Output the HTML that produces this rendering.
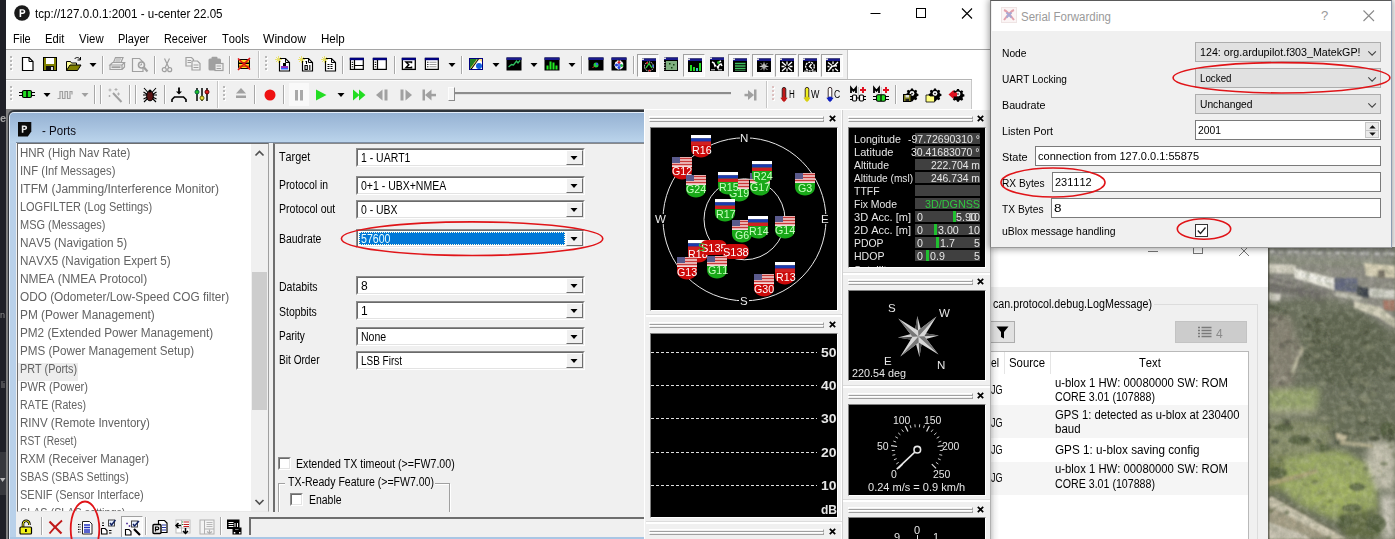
<!DOCTYPE html>
<html lang="en"><head><meta charset="utf-8"><title>tcp://127.0.0.1:2001 - u-center 22.05</title>
<style>
html,body{margin:0;padding:0;}
body{width:1395px;height:539px;overflow:hidden;position:relative;background:#fff;font-family:"Liberation Sans",sans-serif;font-kerning:none;}
div,span.t,svg{position:absolute;box-sizing:border-box;}
span.t{white-space:nowrap;transform-origin:0 50%;}
svg{overflow:visible;}
</style></head><body>
<div style="left:0px;top:0px;width:1395px;height:539px;background:#ffffff;"></div>
<div style="left:0px;top:0px;width:6px;height:539px;background:#1f2027;"></div>
<div style="left:0px;top:452px;width:6px;height:43px;background:#37383d;"></div>
<span class="t" style="left:0.00px;top:310.00px;font-size:9px;line-height:10.00px;color:#8a8a8a;transform:scaleX(1.0020);">n</span>
<span class="t" style="left:0.50px;top:380.00px;font-size:9px;line-height:10.00px;color:#8a8a8a;transform:scaleX(1.0020);">li</span>
<svg style="left:0px;top:478px;" width="6" height="5" viewBox="0 0 6 5"><path d="M0 0l2.500 4 3-4" fill="#bbb"/></svg>
<span class="t" style="left:0.30px;top:111.50px;font-size:11px;line-height:12.00px;color:#a8a8a8;font-weight:bold;transform:scaleX(1.0020);">e</span>
<div style="left:6px;top:49px;width:984px;height:1px;background:#a5a5a5;"></div>
<div style="left:6px;top:50px;width:841px;height:29px;background:#f0f0f0;"></div>
<div style="left:6px;top:79px;width:965px;height:30px;background:#f0f0f0;"></div>
<div style="left:6px;top:79px;width:965px;height:1px;background:#ffffff;"></div>
<div style="left:847px;top:50px;width:1px;height:29px;background:#c8c8c8;"></div>
<div style="left:847px;top:79px;width:125px;height:1px;background:#b4b4b4;"></div>
<div style="left:971px;top:80px;width:1px;height:29px;background:#c8c8c8;"></div>
<div style="left:258px;top:51px;width:1px;height:27px;background:#c5c5c5;"></div>
<div style="left:259px;top:51px;width:1px;height:27px;background:#ffffff;"></div>
<div style="left:217px;top:81px;width:1px;height:27px;background:#c5c5c5;"></div>
<div style="left:218px;top:81px;width:1px;height:27px;background:#ffffff;"></div>
<div style="left:766px;top:81px;width:1px;height:27px;background:#c5c5c5;"></div>
<div style="left:767px;top:81px;width:1px;height:27px;background:#ffffff;"></div>
<svg style="left:14px;top:5px;" width="16" height="16" viewBox="0 0 16 16"><circle cx="8" cy="8" r="7.800" fill="#1a1a1a"/><path d="M5.600 12V4.200h3.200c1.600 0 2.500 1 2.500 2.400S10.400 9 8.800 9H7.200v3zM7.200 5.600v2h1.400c.7 0 1.100-.4 1.100-1s-.4-1-1.100-1z" fill="#fff"/></svg>
<span class="t" style="left:35.00px;top:7.00px;font-size:12.5px;line-height:14.00px;color:#000;transform:scaleX(0.9273);">tcp://127.0.0.1:2001 - u-center 22.05</span>
<svg style="left:860px;top:0px;" width="130" height="30" viewBox="0 0 130 30"><path d="M10.500 13.500h10" stroke="#000"/><rect x="56.500" y="8.500" width="9" height="9" fill="none" stroke="#000"/><path d="M102 8.500l10 10M112 8.500l-10 10" stroke="#000" stroke-width="1.100"/></svg>
<span class="t" style="left:13.30px;top:32.20px;font-size:12px;line-height:14.00px;color:#000;transform:scaleX(0.9154);">File</span>
<span class="t" style="left:45.30px;top:32.20px;font-size:12px;line-height:14.00px;color:#000;transform:scaleX(0.9382);">Edit</span>
<span class="t" style="left:79.20px;top:32.20px;font-size:12px;line-height:14.00px;color:#000;transform:scaleX(0.9460);">View</span>
<span class="t" style="left:118.40px;top:32.20px;font-size:12px;line-height:14.00px;color:#000;transform:scaleX(0.9173);">Player</span>
<span class="t" style="left:164.40px;top:32.20px;font-size:12px;line-height:14.00px;color:#000;transform:scaleX(0.9082);">Receiver</span>
<span class="t" style="left:222.40px;top:32.20px;font-size:12px;line-height:14.00px;color:#000;transform:scaleX(0.9282);">Tools</span>
<span class="t" style="left:263.00px;top:32.20px;font-size:12px;line-height:14.00px;color:#000;transform:scaleX(1.0075);">Window</span>
<span class="t" style="left:320.60px;top:32.20px;font-size:12px;line-height:14.00px;color:#000;transform:scaleX(0.9644);">Help</span>
<div style="left:6px;top:79px;width:966px;height:1px;background:#b4b4b4;"></div>
<div style="left:6px;top:80px;width:965px;height:1px;background:#fcfcfc;"></div>
<svg style="left:10px;top:56px;" width="4" height="18" viewBox="0 0 4 18"><rect x="1" y="1" width="2" height="2" fill="#fff"/><rect x="0" y="0" width="2" height="2" fill="#b8b8b8"/><rect x="1" y="5" width="2" height="2" fill="#fff"/><rect x="0" y="4" width="2" height="2" fill="#b8b8b8"/><rect x="1" y="9" width="2" height="2" fill="#fff"/><rect x="0" y="8" width="2" height="2" fill="#b8b8b8"/><rect x="1" y="13" width="2" height="2" fill="#fff"/><rect x="0" y="12" width="2" height="2" fill="#b8b8b8"/></svg>
<svg style="left:19.5px;top:55.5px;" width="16" height="16" viewBox="0 0 16 16"><path d="M2.500 1.500h6.500l4 4v9h-10.500z" fill="#fff" stroke="#000" stroke-width="1.200"/><path d="M9 1.500v4h4" fill="none" stroke="#000"/></svg>
<svg style="left:42px;top:56px;" width="16" height="16" viewBox="0 0 16 16"><rect x="1" y="1" width="14" height="14" fill="#000"/><rect x="2" y="2" width="12" height="12" fill="#808000"/><rect x="4" y="2" width="8" height="6" fill="#fff"/><rect x="4" y="10" width="8" height="4" fill="#111"/><rect x="9" y="11" width="2" height="3" fill="#ddd"/></svg>
<svg style="left:65.5px;top:55.5px;" width="16" height="16" viewBox="0 0 16 16"><path d="M0.500 14.500v-9h4l1 1.500h5v3" fill="#ffff99" stroke="#000"/><path d="M0.500 14.500l3.500-5.500h11l-3.500 5.500z" fill="#808000" stroke="#000"/><path d="M8.500 3c1.500-2 4.500-2 5.500 0.500M14.500 1v3h-3" fill="none" stroke="#000"/></svg>
<svg style="left:88.5px;top:63px;" width="8" height="4" viewBox="0 0 8 4"><path d="M0.500 0h7L4 4z" fill="#000"/></svg>
<div style="left:102px;top:56px;width:1px;height:18px;background:#a8a8a8;"></div>
<div style="left:103px;top:56px;width:1px;height:18px;background:#ffffff;"></div>
<svg style="left:109px;top:56px;" width="16" height="16" viewBox="0 0 16 16"><g fill="#f0f0f0" stroke="#a0a0a0" stroke-width="1.200"><path d="M4.500 6.500l2-5h7.500l-2 5z"/><path d="M7 3h5M6.300 5h5"/><path d="M1 9l2.500-2.500h12l-2.500 2.500zM1 9v4.500h12v-4.500M13 13.500l2.500-2.500v-4.500"/></g><rect x="2.500" y="10.300" width="9" height="1.800" fill="#a0a0a0"/></svg>
<svg style="left:132px;top:56.5px;" width="16" height="16" viewBox="0 0 16 16"><g fill="none" stroke="#a0a0a0"><path d="M0.500 1.500h7l3.500 3.500v9.500h-10.500z" stroke-width="1.200"/><circle cx="9.500" cy="8" r="3" stroke-width="1.600" fill="#f0f0f0"/><path d="M9.500 6.500v1.500h-1.500" /><path d="M12 10.500l3.500 4" stroke-width="2.200"/></g></svg>
<div style="left:154px;top:56px;width:1px;height:18px;background:#a8a8a8;"></div>
<div style="left:155px;top:56px;width:1px;height:18px;background:#ffffff;"></div>
<svg style="left:159.3px;top:57px;" width="16" height="16" viewBox="0 0 16 16"><g fill="none" stroke="#a0a0a0" stroke-width="1.200"><path d="M5.500 1.500l4.500 9.500M10.500 1.500l-4.500 9.500"/><circle cx="5.300" cy="12.700" r="2"/><circle cx="10.700" cy="12.700" r="2"/></g></svg>
<svg style="left:184.5px;top:55.5px;" width="16" height="16" viewBox="0 0 16 16"><g fill="#f0f0f0" stroke="#a0a0a0" stroke-width="1.200"><path d="M1 1.500h5.500l2 2v6.500h-7.500z"/><path d="M7 5h5.500l2.500 2.500v6.500h-8z"/><path d="M2.500 4.500h3.500M2.500 6.500h3.500M8.500 9h5M8.500 11.500h5"/></g></svg>
<svg style="left:207.5px;top:56.3px;" width="16" height="16" viewBox="0 0 16 16"><rect x="0.500" y="2.500" width="12.500" height="12" rx="1.500" fill="#a0a0a0"/><rect x="3.500" y="0.800" width="6" height="3" rx="1" fill="#a0a0a0"/><rect x="7" y="7.500" width="8" height="7" fill="#f0f0f0" stroke="#a0a0a0" stroke-width="1.200"/><path d="M8.500 10h4.500M8.500 12.500h4.500" stroke="#a0a0a0" stroke-width="1.200"/></svg>
<div style="left:229px;top:56px;width:1px;height:18px;background:#a8a8a8;"></div>
<div style="left:230px;top:56px;width:1px;height:18px;background:#ffffff;"></div>
<svg style="left:236px;top:56px;" width="16" height="16" viewBox="0 0 16 16"><rect x="2" y="3" width="12" height="10" rx="2" fill="#000"/><rect x="3" y="4" width="10" height="8" fill="#ffd020"/><rect x="3" y="6.500" width="10" height="1.500" fill="#000"/><rect x="3" y="9.500" width="10" height="1.500" fill="#c06000"/><path d="M2 2.500l12 11M14 2l-12 12" stroke="#e01010" stroke-width="1.600"/></svg>
<svg style="left:265px;top:56px;" width="4" height="18" viewBox="0 0 4 18"><rect x="1" y="1" width="2" height="2" fill="#fff"/><rect x="0" y="0" width="2" height="2" fill="#b8b8b8"/><rect x="1" y="5" width="2" height="2" fill="#fff"/><rect x="0" y="4" width="2" height="2" fill="#b8b8b8"/><rect x="1" y="9" width="2" height="2" fill="#fff"/><rect x="0" y="8" width="2" height="2" fill="#b8b8b8"/><rect x="1" y="13" width="2" height="2" fill="#fff"/><rect x="0" y="12" width="2" height="2" fill="#b8b8b8"/></svg>
<svg style="left:274.5px;top:55.7px;" width="16" height="16" viewBox="0 0 16 16"><path d="M4.500 2.500h6l4 4v8.500h-10z" fill="#fff" stroke="#000" stroke-width="1.150"/><path d="M10.500 2.500v4h4" fill="none" stroke="#000"/><rect x="6" y="10" width="7" height="3" fill="#9030c0"/><rect x="8" y="7" width="3" height="3" fill="#000"/><rect x="6" y="12" width="7" height="1.500" fill="#3060ff"/><path d="M3.500 0v7M0 3.500h7M1 1l5 5M6 1l-5 5" stroke="#e8e060" stroke-width="0.900"/></svg>
<svg style="left:297.5px;top:55.7px;" width="16" height="16" viewBox="0 0 16 16"><path d="M4.500 2.500h6l4 4v8.500h-10z" fill="#fff" stroke="#000" stroke-width="1.150"/><path d="M10.500 2.500v4h4" fill="none" stroke="#000"/><path d="M7 9.500h2.300v4h-2.300zM11.800 9v5M8.500 5v3M7.500 5.500h1" fill="none" stroke="#000" stroke-width="1.100"/><path d="M3.500 0v7M0 3.500h7M1 1l5 5M6 1l-5 5" stroke="#e8e060" stroke-width="0.900"/></svg>
<svg style="left:320.5px;top:55.7px;" width="16" height="16" viewBox="0 0 16 16"><path d="M4.500 2.500h6l4 4v8.500h-10z" fill="#fff" stroke="#000" stroke-width="1.150"/><path d="M10.500 2.500v4h4" fill="none" stroke="#000"/><path d="M6.500 8.500h6M6.500 10.500h6M6.500 12.500h6" stroke="#000" stroke-width="1.200" stroke-dasharray="2 1"/><path d="M3.500 0v7M0 3.500h7M1 1l5 5M6 1l-5 5" stroke="#e8e060" stroke-width="0.900"/></svg>
<div style="left:342px;top:56px;width:1px;height:18px;background:#a8a8a8;"></div>
<div style="left:343px;top:56px;width:1px;height:18px;background:#ffffff;"></div>
<svg style="left:349px;top:56px;" width="16" height="16" viewBox="0 0 16 16"><rect x="1.400" y="2.400" width="12.900" height="11" fill="#fff" stroke="#000" stroke-width="1.200"/><rect x="0.800" y="1.800" width="14.100" height="2.400" fill="#000080"/><path d="M5.500 4v9.500M5.500 9.500h9" stroke="#000" stroke-width="1.200"/><path d="M2.700 6.300h1.500M2.700 8.500h1.500M2.700 10.800h1.500" stroke="#000" stroke-width="1.100"/></svg>
<svg style="left:372px;top:56px;" width="16" height="16" viewBox="0 0 16 16"><rect x="1.400" y="2.400" width="12.900" height="11" fill="#fff" stroke="#000" stroke-width="1.200"/><rect x="0.800" y="1.800" width="14.100" height="2.400" fill="#000080"/><path d="M5.500 4v9.500" stroke="#000" stroke-width="1.200"/><path d="M2.700 6.300h1.500M2.700 8.500h1.500M2.700 10.800h1.500" stroke="#000" stroke-width="1.100"/></svg>
<div style="left:394px;top:56px;width:1px;height:18px;background:#a8a8a8;"></div>
<div style="left:395px;top:56px;width:1px;height:18px;background:#ffffff;"></div>
<svg style="left:401px;top:56px;" width="16" height="16" viewBox="0 0 16 16"><rect x="1.400" y="2.400" width="12.900" height="11" fill="#fff" stroke="#000" stroke-width="1.300"/><rect x="0.800" y="1.800" width="14.100" height="2.400" fill="#000080"/><path d="M10.500 7.300v-1.300h-5.500l2.800 2.800-2.800 2.900h5.500v-1.300" fill="none" stroke="#000" stroke-width="1.500"/></svg>
<svg style="left:424px;top:56px;" width="16" height="16" viewBox="0 0 16 16"><rect x="1.400" y="2.400" width="12.900" height="11" fill="#fff" stroke="#000" stroke-width="1.200"/><rect x="0.800" y="1.800" width="14.100" height="2.400" fill="#000080"/><path d="M3 6.300h1.500M3 8.500h1.500M3 10.800h1.500" stroke="#333" stroke-width="1.100"/><path d="M5.500 6.300h7M5.500 8.500h7M5.500 10.800h7" stroke="#999" stroke-width="1.100"/></svg>
<svg style="left:447.5px;top:63px;" width="8" height="4" viewBox="0 0 8 4"><path d="M0.500 0h7L4 4z" fill="#000"/></svg>
<div style="left:461px;top:56px;width:1px;height:18px;background:#a8a8a8;"></div>
<div style="left:462px;top:56px;width:1px;height:18px;background:#ffffff;"></div>
<svg style="left:468px;top:56px;" width="16" height="16" viewBox="0 0 16 16"><rect x="1" y="2" width="14" height="12" fill="#000080"/><rect x="2" y="3" width="12" height="10" fill="#208020"/><path d="M2 13L9 3h5v10z" fill="#fff"/><path d="M3 13L9.500 4l2-1" fill="none" stroke="#000" stroke-width="1.300"/><circle cx="11" cy="10" r="3" fill="#1060e0"/><path d="M10 3h4v3" fill="#ffe080"/><path d="M3 12l6-8" stroke="#f0e040" stroke-width="0.800"/></svg>
<svg style="left:491.5px;top:63px;" width="8" height="4" viewBox="0 0 8 4"><path d="M0.500 0h7L4 4z" fill="#000"/></svg>
<svg style="left:506px;top:56px;" width="16" height="16" viewBox="0 0 16 16"><rect x="0.5" y="1.5" width="15" height="13" fill="#000"/><rect x="0.5" y="1.5" width="15" height="2.500" fill="#1a1a8c"/><path d="M2.500 11l3-2.500 2 0.500 3-4 1.500 2 2-2.500" fill="none" stroke="#30c060" stroke-width="1.300"/></svg>
<svg style="left:529.5px;top:63px;" width="8" height="4" viewBox="0 0 8 4"><path d="M0.500 0h7L4 4z" fill="#000"/></svg>
<svg style="left:544px;top:56px;" width="16" height="16" viewBox="0 0 16 16"><rect x="0.5" y="1.5" width="15" height="13" fill="#000"/><rect x="0.5" y="1.5" width="15" height="2.500" fill="#1a1a8c"/><path d="M3.500 13.500v-4M6.500 13.500v-8M9.500 13.500v-7M12.500 13.500v-4" stroke="#22ee22" stroke-width="2"/></svg>
<svg style="left:567.5px;top:63px;" width="8" height="4" viewBox="0 0 8 4"><path d="M0.500 0h7L4 4z" fill="#000"/></svg>
<div style="left:581px;top:56px;width:1px;height:18px;background:#a8a8a8;"></div>
<div style="left:582px;top:56px;width:1px;height:18px;background:#ffffff;"></div>
<svg style="left:588px;top:56px;" width="16" height="16" viewBox="0 0 16 16"><rect x="0.5" y="1.5" width="15" height="13" fill="#000"/><rect x="0.5" y="1.5" width="15" height="2.500" fill="#1a1a8c"/><circle cx="8" cy="9" r="2.500" fill="#20d040"/><circle cx="9" cy="8" r="1.200" fill="#4060e0"/><path d="M4.500 12l2-2" stroke="#d04020"/></svg>
<svg style="left:611px;top:56px;" width="16" height="16" viewBox="0 0 16 16"><rect x="0.5" y="1.5" width="15" height="13" fill="#000"/><rect x="0.5" y="1.5" width="15" height="2.500" fill="#1a1a8c"/><circle cx="8" cy="9" r="4.700" fill="#fff"/><circle cx="8" cy="9" r="4.700" fill="none" stroke="#000" stroke-dasharray="1.500 1.500"/><circle cx="8" cy="6.500" r="1.500" fill="#e02020"/><circle cx="5.500" cy="9" r="1.500" fill="#2040e0"/><circle cx="10.500" cy="9.500" r="1.500" fill="#20c040"/><circle cx="8" cy="11.500" r="1.500" fill="#2040e0"/><circle cx="8" cy="9" r="1.200" fill="#fff" stroke="#2040e0"/></svg>
<div style="left:633px;top:56px;width:1px;height:18px;background:#a8a8a8;"></div>
<div style="left:634px;top:56px;width:1px;height:18px;background:#ffffff;"></div>
<div style="left:636.5px;top:54px;width:22px;height:23px;background:#fafafa;border-top:1px solid #a0a0a0;border-left:1px solid #a0a0a0;border-right:1px solid #fff;border-bottom:1px solid #fff;"></div>
<svg style="left:640.7px;top:57px;" width="16" height="16" viewBox="0 0 16 16"><rect x="1" y="1.5" width="14" height="13.5" fill="#000"/><rect x="1" y="1.5" width="14" height="2.500" fill="#1a1a8c"/><circle cx="8" cy="9.500" r="4.500" fill="none" stroke="#fff" stroke-dasharray="1.300 1"/><path d="M5 11l3-4.500 3 4.500" fill="none" stroke="#30d040" stroke-width="1.300"/><circle cx="6" cy="6" r="1" fill="#e02020"/><circle cx="8.500" cy="13.500" r="1" fill="#e02020"/><circle cx="12" cy="9" r="0.900" fill="#4080ff"/><rect x="1" y="1.500" width="2" height="1.500" fill="#ddd"/></svg>
<svg style="left:662.5px;top:56px;" width="16" height="16" viewBox="0 0 16 16"><rect x="1" y="1.5" width="14" height="13.5" fill="#000"/><rect x="1" y="1.5" width="14" height="2.500" fill="#1a1a8c"/><rect x="3" y="5" width="11" height="9" fill="#80b080"/><rect x="6" y="7" width="1.500" height="1.500" fill="#104010"/><rect x="10" y="8" width="1.500" height="1.500" fill="#104010"/><rect x="8" y="11" width="1.500" height="1.500" fill="#104010"/><path d="M1.800 6v8" stroke="#fff" stroke-dasharray="1 1.500"/><rect x="1" y="1.500" width="2" height="1.500" fill="#ddd"/></svg>
<div style="left:682.5px;top:54px;width:22px;height:23px;background:#fafafa;border-top:1px solid #a0a0a0;border-left:1px solid #a0a0a0;border-right:1px solid #fff;border-bottom:1px solid #fff;"></div>
<svg style="left:686.7px;top:57px;" width="16" height="16" viewBox="0 0 16 16"><rect x="1" y="1.5" width="14" height="13.5" fill="#000"/><rect x="1" y="1.5" width="14" height="2.500" fill="#1a1a8c"/><path d="M4 14v-6M7 14v-4M10 14v-3M13 14v-8" stroke="#22dd22" stroke-width="2"/><path d="M10 14v-3" stroke="#40c0c0" stroke-width="2"/><rect x="1" y="1.500" width="2" height="1.500" fill="#ddd"/></svg>
<svg style="left:708.5px;top:56px;" width="16" height="16" viewBox="0 0 16 16"><rect x="1" y="1.5" width="14" height="13.5" fill="#000"/><rect x="1" y="1.5" width="14" height="2.500" fill="#1a1a8c"/><path d="M3 6l2 1 1 3 1-1M8 10l1 2 1-3 2-1 1 2M10 6l2-1" fill="none" stroke="#fff" stroke-width="1.500"/><circle cx="9.500" cy="6.500" r="1.500" fill="#30c030"/><path d="M2 13.800h4M9 13.800h4" stroke="#ddd"/><rect x="1" y="1.500" width="2" height="1.500" fill="#ddd"/></svg>
<div style="left:728px;top:54px;width:22px;height:23px;background:#fafafa;border-top:1px solid #a0a0a0;border-left:1px solid #a0a0a0;border-right:1px solid #fff;border-bottom:1px solid #fff;"></div>
<svg style="left:732.2px;top:57px;" width="16" height="16" viewBox="0 0 16 16"><rect x="1" y="1.5" width="14" height="13.5" fill="#000"/><rect x="1" y="1.5" width="14" height="2.500" fill="#1a1a8c"/><path d="M3 6.500h10.500M3 9h10.500M3 11.500h10.500" stroke="#40c060" stroke-width="1.400"/><path d="M3 13.500h10.500" stroke="#2a6a3a"/><rect x="1" y="1.500" width="2" height="1.500" fill="#ddd"/></svg>
<div style="left:751.5px;top:54px;width:22px;height:23px;background:#fafafa;border-top:1px solid #a0a0a0;border-left:1px solid #a0a0a0;border-right:1px solid #fff;border-bottom:1px solid #fff;"></div>
<svg style="left:755.7px;top:57px;" width="16" height="16" viewBox="0 0 16 16"><rect x="1" y="1.5" width="14" height="13.5" fill="#000"/><rect x="1" y="1.5" width="14" height="2.500" fill="#1a1a8c"/><path d="M8 4.500l1 3.500 4 1.500-4 1-1 3.500-1-3.500-4-1 4-1.500z" fill="#ccc"/><path d="M4.500 6l7 7M11.500 6l-7 7" stroke="#aaa"/><rect x="1" y="1.500" width="2" height="1.500" fill="#ddd"/></svg>
<div style="left:774.5px;top:54px;width:22px;height:23px;background:#fafafa;border-top:1px solid #a0a0a0;border-left:1px solid #a0a0a0;border-right:1px solid #fff;border-bottom:1px solid #fff;"></div>
<svg style="left:778.7px;top:57px;" width="16" height="16" viewBox="0 0 16 16"><rect x="1" y="1.5" width="14" height="13.5" fill="#000"/><rect x="1" y="1.5" width="14" height="2.500" fill="#1a1a8c"/><path d="M3 5l10 9M13 5l-10 9M8 4.500v3M2.500 9.500h3M10.500 9.500h3M8 11.500v3" stroke="#fff" stroke-width="1.300"/><circle cx="8" cy="9.500" r="1.500" fill="#000"/><rect x="1" y="1.500" width="2" height="1.500" fill="#ddd"/></svg>
<div style="left:797.5px;top:54px;width:22px;height:23px;background:#fafafa;border-top:1px solid #a0a0a0;border-left:1px solid #a0a0a0;border-right:1px solid #fff;border-bottom:1px solid #fff;"></div>
<svg style="left:801.7px;top:57px;" width="16" height="16" viewBox="0 0 16 16"><rect x="1" y="1.5" width="14" height="13.5" fill="#000"/><rect x="1" y="1.5" width="14" height="2.500" fill="#1a1a8c"/><circle cx="8" cy="9.500" r="4.300" fill="none" stroke="#fff" stroke-width="1.300" stroke-dasharray="2 1"/><path d="M9.500 7l-2 2.500 2.500 2" fill="none" stroke="#fff" stroke-width="1.300"/><path d="M2 14.200h4M10 14.200h4" stroke="#ddd"/><rect x="1" y="1.500" width="2" height="1.500" fill="#ddd"/></svg>
<div style="left:820.5px;top:54px;width:22px;height:23px;background:#fafafa;border-top:1px solid #a0a0a0;border-left:1px solid #a0a0a0;border-right:1px solid #fff;border-bottom:1px solid #fff;"></div>
<svg style="left:824.7px;top:57px;" width="16" height="16" viewBox="0 0 16 16"><rect x="1" y="1.5" width="14" height="13.5" fill="#000"/><rect x="1" y="1.5" width="14" height="2.500" fill="#1a1a8c"/><path d="M3 5.500l4 3M13 5l-4 4M3 14l3-3M13 14l-3-2.500M8 4.500v2.500M8 12v2.500M2.500 9.500h2" stroke="#fff" stroke-width="1.300"/><path d="M5 11.500c2-3 4-3 7-2.500" fill="none" stroke="#fff" stroke-width="1.500"/><rect x="1" y="1.500" width="2" height="1.500" fill="#ddd"/></svg>
<svg style="left:10px;top:86px;" width="4" height="18" viewBox="0 0 4 18"><rect x="1" y="1" width="2" height="2" fill="#fff"/><rect x="0" y="0" width="2" height="2" fill="#b8b8b8"/><rect x="1" y="5" width="2" height="2" fill="#fff"/><rect x="0" y="4" width="2" height="2" fill="#b8b8b8"/><rect x="1" y="9" width="2" height="2" fill="#fff"/><rect x="0" y="8" width="2" height="2" fill="#b8b8b8"/><rect x="1" y="13" width="2" height="2" fill="#fff"/><rect x="0" y="12" width="2" height="2" fill="#b8b8b8"/></svg>
<svg style="left:19px;top:86px;" width="16" height="16" viewBox="0 0 16 16"><path d="M0 6.500h4M0 9.500h4M12 6.500h4M12 9.500h4" stroke="#000" stroke-width="1.200"/><rect x="3.500" y="4.500" width="9" height="7" rx="1.500" fill="#22dd22" stroke="#000" stroke-width="1.200"/><path d="M8 4.500v7" stroke="#000" stroke-width="1.500"/></svg>
<svg style="left:42.5px;top:93px;" width="8" height="4" viewBox="0 0 8 4"><path d="M0.500 0h7L4 4z" fill="#000"/></svg>
<svg style="left:56.5px;top:86.5px;" width="16" height="16" viewBox="0 0 16 16"><path d="M0.500 11.500h2.500v-7h2.500v7h2.500v-7h2.500v7h2.500v-7h2v3" fill="none" stroke="#a0a0a0" stroke-width="1.200"/></svg>
<svg style="left:80.5px;top:93px;" width="8" height="4" viewBox="0 0 8 4"><path d="M0.500 0h7L4 4z" fill="#a0a0a0"/></svg>
<div style="left:94px;top:85px;width:1px;height:19px;background:#a8a8a8;"></div>
<div style="left:95px;top:85px;width:1px;height:19px;background:#ffffff;"></div>
<div style="left:100px;top:85px;width:1px;height:19px;background:#a8a8a8;"></div>
<div style="left:101px;top:85px;width:1px;height:19px;background:#ffffff;"></div>
<svg style="left:107px;top:86.5px;" width="16" height="16" viewBox="0 0 16 16"><path d="M6 6l8.500 9" stroke="#a0a0a0" stroke-width="2"/><path d="M3 1.500v3M1.500 3h3M9 1v3M7.500 2.500h3M11.500 5.500v3M10 7h3M2.500 8v2M1.500 9h2" stroke="#b0b0b0"/></svg>
<div style="left:129px;top:85px;width:1px;height:19px;background:#a8a8a8;"></div>
<div style="left:130px;top:85px;width:1px;height:19px;background:#ffffff;"></div>
<div style="left:135px;top:85px;width:1px;height:19px;background:#a8a8a8;"></div>
<div style="left:136px;top:85px;width:1px;height:19px;background:#ffffff;"></div>
<svg style="left:141.5px;top:86.5px;" width="16" height="16" viewBox="0 0 16 16"><path d="M2 1l4.500 5M14 1l-4.500 5M1 8h14M2 15l4-4M14 15l-4-4M1.500 5l4 2.500M14.500 5l-4 2.500M1.500 12l4-2M14.500 12l-4-2" stroke="#000" stroke-width="1.100"/><ellipse cx="8" cy="9" rx="3.300" ry="4.800" fill="#5a1414" stroke="#000"/><circle cx="8" cy="4" r="1.600" fill="#000"/></svg>
<div style="left:164px;top:85px;width:1px;height:19px;background:#a8a8a8;"></div>
<div style="left:165px;top:85px;width:1px;height:19px;background:#ffffff;"></div>
<svg style="left:171px;top:86.5px;" width="16" height="16" viewBox="0 0 16 16"><path d="M8 0.500v5" stroke="#000" stroke-width="1.800"/><path d="M5 4.500h6l-3 3z" fill="#000"/><path d="M1 15v-2.500l2.500-2.500h9l2.500 2.500V15" fill="none" stroke="#000" stroke-width="1.600"/></svg>
<svg style="left:194px;top:86.5px;" width="16" height="16" viewBox="0 0 16 16"><path d="M3 1v13M8 1v13M13 1v13" stroke="#000" stroke-width="1.500"/><circle cx="3" cy="5" r="2" fill="#20c020" stroke="#064"/><circle cx="8" cy="11" r="2" fill="#f0e040" stroke="#660"/><circle cx="13" cy="5" r="2" fill="#e02020" stroke="#600"/></svg>
<svg style="left:223px;top:86px;" width="4" height="18" viewBox="0 0 4 18"><rect x="1" y="1" width="2" height="2" fill="#fff"/><rect x="0" y="0" width="2" height="2" fill="#b8b8b8"/><rect x="1" y="5" width="2" height="2" fill="#fff"/><rect x="0" y="4" width="2" height="2" fill="#b8b8b8"/><rect x="1" y="9" width="2" height="2" fill="#fff"/><rect x="0" y="8" width="2" height="2" fill="#b8b8b8"/><rect x="1" y="13" width="2" height="2" fill="#fff"/><rect x="0" y="12" width="2" height="2" fill="#b8b8b8"/></svg>
<svg style="left:232.5px;top:86px;" width="16" height="16" viewBox="0 0 16 16"><path d="M3 7.500l5-5.500 5 5.500z" fill="#a0a0a0"/><rect x="3" y="9.500" width="10" height="2.500" fill="#a0a0a0"/></svg>
<div style="left:254px;top:85px;width:1px;height:19px;background:#a8a8a8;"></div>
<div style="left:255px;top:85px;width:1px;height:19px;background:#ffffff;"></div>
<svg style="left:261.5px;top:86.5px;" width="16" height="16" viewBox="0 0 16 16"><circle cx="8" cy="8" r="5.500" fill="#ee1111"/></svg>
<div style="left:283px;top:85px;width:1px;height:19px;background:#a8a8a8;"></div>
<div style="left:284px;top:85px;width:1px;height:19px;background:#ffffff;"></div>
<div style="left:289px;top:83px;width:20px;height:23px;background:#f9f9f9;"></div>
<svg style="left:291px;top:87px;" width="16" height="16" viewBox="0 0 16 16"><rect x="4" y="3" width="3" height="10.500" fill="#a8a8a8"/><rect x="9" y="3" width="3" height="10.500" fill="#a8a8a8"/></svg>
<svg style="left:313px;top:86.5px;" width="16" height="16" viewBox="0 0 16 16"><path d="M3 2.500v11l10.500-5.500z" fill="#22dd22"/></svg>
<svg style="left:336.5px;top:93px;" width="8" height="4" viewBox="0 0 8 4"><path d="M0.500 0h7L4 4z" fill="#000"/></svg>
<svg style="left:351px;top:86.5px;" width="16" height="16" viewBox="0 0 16 16"><path d="M2 2.500v11l6.500-5.500zM8 2.500v11l6.500-5.500z" fill="#22dd22"/></svg>
<svg style="left:373.5px;top:86.5px;" width="16" height="16" viewBox="0 0 16 16"><path d="M8.500 2.500v11l-6.500-5.500z" fill="#a0a0a0"/><rect x="10.500" y="2.500" width="3" height="11" fill="#a0a0a0"/></svg>
<svg style="left:397.5px;top:86.5px;" width="16" height="16" viewBox="0 0 16 16"><path d="M7.500 2.500v11l6.500-5.500z" fill="#a0a0a0"/><rect x="2.500" y="2.500" width="3" height="11" fill="#a0a0a0"/></svg>
<svg style="left:420.5px;top:86.5px;" width="16" height="16" viewBox="0 0 16 16"><rect x="1.500" y="2.500" width="2.500" height="11" fill="#a0a0a0"/><path d="M10.500 2.500v11l-6.500-5.500z" fill="#a0a0a0"/><rect x="8" y="6.800" width="7" height="2.500" fill="#a0a0a0"/></svg>
<div style="left:454px;top:92px;width:277px;height:2px;background:#8c8c8c;"></div>
<div style="left:454px;top:94px;width:277px;height:1px;background:#e0e0e0;"></div>
<div style="left:448px;top:87px;width:7px;height:14px;background:#f4f4f4;border:1px solid #fdfdfd;border-right:1.500px solid #8a8a8a;border-bottom:1.500px solid #8a8a8a;"></div>
<svg style="left:742.5px;top:86.5px;" width="16" height="16" viewBox="0 0 16 16"><rect x="11" y="2.500" width="2.500" height="11" fill="#a0a0a0"/><path d="M5 3l6 5-6 5z" fill="#a0a0a0"/><rect x="1.500" y="6.800" width="6" height="2.500" fill="#a0a0a0"/></svg>
<svg style="left:771.5px;top:86px;" width="4" height="18" viewBox="0 0 4 18"><rect x="1" y="1" width="2" height="2" fill="#fff"/><rect x="0" y="0" width="2" height="2" fill="#dcc0c0"/><rect x="1" y="5" width="2" height="2" fill="#fff"/><rect x="0" y="4" width="2" height="2" fill="#dcc0c0"/><rect x="1" y="9" width="2" height="2" fill="#fff"/><rect x="0" y="8" width="2" height="2" fill="#dcc0c0"/><rect x="1" y="13" width="2" height="2" fill="#fff"/><rect x="0" y="12" width="2" height="2" fill="#dcc0c0"/></svg>
<svg style="left:775.7px;top:86.5px;" width="16" height="16" viewBox="0 0 16 16"><path d="M6.200 2.200a1.800 1.800 0 0 1 3.600 0v9h-3.600z" fill="#c01818" stroke="#2a1a1a" stroke-width="0.900"/><path d="M4.300 10.800h7.400l-3.700 4.400z" fill="#c01818"/><circle cx="8" cy="11.800" r="2.300" fill="#c01818"/></svg>
<span class="t" style="left:788.60px;top:89.20px;font-size:10px;line-height:11.00px;color:#000;transform:scaleX(0.8031);">H</span>
<svg style="left:798.7px;top:86.5px;" width="16" height="16" viewBox="0 0 16 16"><path d="M6.200 2.200a1.800 1.800 0 0 1 3.600 0v9h-3.600z" fill="#f0f020" stroke="#2a1a1a" stroke-width="0.900"/><path d="M4.300 10.800h7.400l-3.700 4.400z" fill="#d8d010"/><circle cx="8" cy="11.800" r="2.300" fill="#d8d010"/></svg>
<span class="t" style="left:810.60px;top:89.20px;font-size:10px;line-height:11.00px;color:#000;transform:scaleX(0.8899);">W</span>
<svg style="left:821.7px;top:86.5px;" width="16" height="16" viewBox="0 0 16 16"><path d="M6.200 2.200a1.800 1.800 0 0 1 3.600 0v9h-3.600z" fill="#ffffff" stroke="#2a1a1a" stroke-width="0.900"/><path d="M4.300 10.800h7.400l-3.700 4.400z" fill="#1020c0"/><circle cx="8" cy="11.800" r="2.300" fill="#1020c0"/></svg>
<span class="t" style="left:834.20px;top:89.20px;font-size:10px;line-height:11.00px;color:#000;transform:scaleX(0.8585);">C</span>
<svg style="left:850px;top:86.5px;" width="16" height="16" viewBox="0 0 16 16"><path d="M1 6V0.800l2.500 3 2.500-3V6" fill="none" stroke="#000" stroke-width="1.800"/><path d="M8.300 0v14" stroke="#aaa" stroke-width="0.700"/><path d="M13 0v6M10 3h6" stroke="#e01020" stroke-width="2"/><path d="M0 9.500h3M0 12.500h3M6.500 11h3M13 9.500h3M13 12.500h3" stroke="#000" stroke-width="1.200"/><rect x="2.500" y="8" width="4" height="6" rx="1.200" fill="#fff" stroke="#000" stroke-width="1.200"/><rect x="9.500" y="8" width="4" height="6" rx="1.200" fill="#fff" stroke="#000" stroke-width="1.200"/></svg>
<svg style="left:873px;top:86.5px;" width="16" height="16" viewBox="0 0 16 16"><path d="M1 6V0.800l2.500 3 2.500-3V6" fill="none" stroke="#000" stroke-width="1.800"/><path d="M8.300 0v14" stroke="#aaa" stroke-width="0.700"/><path d="M13 0v6M10 3h6" stroke="#e01020" stroke-width="2"/><path d="M0 9.500h4M0 12.500h4M12 9.500h4M12 12.500h4" stroke="#000" stroke-width="1.200"/><rect x="3.500" y="7.800" width="9" height="6.400" rx="1.500" fill="#22dd22" stroke="#000" stroke-width="1.100"/><path d="M8 8v6" stroke="#000" stroke-width="1.300"/></svg>
<div style="left:895px;top:85px;width:1px;height:19px;background:#a8a8a8;"></div>
<div style="left:896px;top:85px;width:1px;height:19px;background:#ffffff;"></div>
<svg style="left:901.5px;top:87px;" width="16" height="16" viewBox="0 0 16 16"><g transform="translate(10,6.5) scale(0.830)"><path d="M-1.200-6h2.400l.4 1.600 1.500.7 1.500-.9 1.700 1.700-.9 1.500.6 1.500 1.700.4v2.400l-1.700.4-.6 1.500.9 1.500-1.700 1.700-1.500-.9-1.500.6-.4 1.700h-2.400l-.4-1.700-1.500-.6-1.500.9-1.700-1.700.9-1.500-.6-1.500-1.700-.4v-2.400l1.700-.4.6-1.500-.9-1.500 1.700-1.700 1.500.9 1.500-.7z" fill="#000"/><circle r="2.900" fill="#f0f0f0"/><circle r="1" fill="#000"/></g><rect x="1" y="7" width="8.500" height="8" fill="#000"/><rect x="2" y="8" width="6.500" height="6" fill="#808020"/><rect x="3.500" y="8" width="3.500" height="2.500" fill="#ddd"/><rect x="3.500" y="12" width="3.500" height="2" fill="#222"/></svg>
<svg style="left:925px;top:87px;" width="16" height="16" viewBox="0 0 16 16"><g transform="translate(10,6.5) scale(0.830)"><path d="M-1.200-6h2.400l.4 1.600 1.500.7 1.500-.9 1.700 1.700-.9 1.500.6 1.500 1.700.4v2.400l-1.700.4-.6 1.500.9 1.500-1.700 1.700-1.500-.9-1.500.6-.4 1.700h-2.400l-.4-1.700-1.500-.6-1.500.9-1.700-1.700.9-1.500-.6-1.500-1.700-.4v-2.400l1.700-.4.6-1.500-.9-1.500 1.700-1.700 1.500.9 1.500-.7z" fill="#000"/><circle r="2.900" fill="#f0f0f0"/><circle r="1" fill="#000"/></g><path d="M1 15V8h3l1 1h4.500v6z" fill="#ffff80" stroke="#000" stroke-width="0.800"/></svg>
<svg style="left:948px;top:87px;" width="16" height="16" viewBox="0 0 16 16"><g transform="translate(10,7) scale(0.830)"><path d="M-1.200-6h2.400l.4 1.600 1.500.7 1.500-.9 1.700 1.700-.9 1.500.6 1.500 1.700.4v2.400l-1.700.4-.6 1.500.9 1.500-1.700 1.700-1.500-.9-1.500.6-.4 1.700h-2.400l-.4-1.700-1.500-.6-1.500.9-1.700-1.700.9-1.500-.6-1.500-1.700-.4v-2.400l1.700-.4.6-1.500-.9-1.500 1.700-1.700 1.500.9 1.500-.7z" fill="#000"/><circle r="2.900" fill="#f0f0f0"/><circle r="1" fill="#000"/></g><path d="M0.500 7.500l5-4.500v2.500h3.500v4h-3.500v2.500z" fill="#e01020"/></svg>
<div style="left:6px;top:109px;width:639px;height:430px;background:#808080;"></div>
<div style="left:6px;top:109px;width:638.500px;height:430px;overflow:hidden;">
<div style="left:1.5px;top:0.5px;width:697.5px;height:429.5px;background:#30353c;border-radius:6px 6px 0 0;"></div>
<div style="left:3px;top:2.5px;width:695px;height:428px;background:#e4eefa;border-radius:5px 5px 0 0;"></div>
<div style="left:4px;top:3.5px;width:693px;height:427px;background:#b9d1ea;border-radius:4px 4px 0 0;"></div>
<div style="left:4px;top:3.5px;width:693px;height:30px;background:linear-gradient(#96b2d3,#a6c1de 45%,#bcd5ec);border-radius:4px 4px 0 0;"></div>
<div style="left:10px;top:33px;width:682px;height:1px;background:#7d8fa6;"></div>
<div style="left:10px;top:34px;width:682px;height:394px;background:#f0f0f0;"></div>
<div style="left:4px;top:428px;width:693px;height:2px;background:#a9c6e4;"></div>
<svg style="left:12px;top:13px;" width="14" height="15" viewBox="0 0 14 15"><path d="M0 0h13.300v9.500l-3.500 5H0z" fill="#0a0a0a"/><path d="M3.800 10.800V3.600h2.900c1.500 0 2.400.9 2.400 2.200S8.200 8 6.700 8H5.400v2.800zM5.400 4.900v1.800h1.100c.6 0 .95-.35.950-.9s-.35-.9-.950-.9z" fill="#e8e8e8"/></svg>
<span class="t" style="left:35.50px;top:15.40px;font-size:12.5px;line-height:14.00px;color:#0a0a14;transform:scaleX(0.9237);">- Ports</span>
<div style="left:11px;top:34px;width:252px;height:369px;background:#ffffff;border:1px solid #6e6e6e;border-right:1px solid #a0a0a0;border-bottom:1px solid #e8e8e8;"></div>
<div style="left:245px;top:35px;width:17px;height:367px;background:#f0f0f0;"></div>
<div style="left:246px;top:163px;width:15px;height:138px;background:#cdcdcd;"></div>
<svg style="left:248px;top:41px;" width="11" height="7" viewBox="0 0 11 7"><path d="M1.500 5.500l4-4 4 4" fill="none" stroke="#505050" stroke-width="1.700"/></svg>
<svg style="left:248px;top:390px;" width="11" height="7" viewBox="0 0 11 7"><path d="M1.500 1l4 4 4-4" fill="none" stroke="#505050" stroke-width="1.700"/></svg>
<div style="left:12px;top:254px;width:60px;height:18px;background:#ededed;"></div>
<div style="left:12px;top:35px;width:233px;height:367px;overflow:hidden;">
<span class="t" style="left:2.10px;top:1.70px;font-size:12px;line-height:14.00px;color:#626262;transform:scaleX(0.9570);">HNR (High Nav Rate)</span>
<span class="t" style="left:2.10px;top:19.70px;font-size:12px;line-height:14.00px;color:#626262;transform:scaleX(0.9351);">INF (Inf Messages)</span>
<span class="t" style="left:2.10px;top:37.70px;font-size:12px;line-height:14.00px;color:#626262;transform:scaleX(1.0020);">ITFM (Jamming/Interference Monitor)</span>
<span class="t" style="left:2.10px;top:55.70px;font-size:12px;line-height:14.00px;color:#626262;transform:scaleX(0.9136);">LOGFILTER (Log Settings)</span>
<span class="t" style="left:2.10px;top:73.70px;font-size:12px;line-height:14.00px;color:#626262;transform:scaleX(0.9149);">MSG (Messages)</span>
<span class="t" style="left:2.10px;top:91.70px;font-size:12px;line-height:14.00px;color:#626262;transform:scaleX(0.9808);">NAV5 (Navigation 5)</span>
<span class="t" style="left:2.10px;top:109.70px;font-size:12px;line-height:14.00px;color:#626262;transform:scaleX(0.9695);">NAVX5 (Navigation Expert 5)</span>
<span class="t" style="left:2.10px;top:127.70px;font-size:12px;line-height:14.00px;color:#626262;transform:scaleX(0.9937);">NMEA (NMEA Protocol)</span>
<span class="t" style="left:2.10px;top:145.70px;font-size:12px;line-height:14.00px;color:#626262;transform:scaleX(0.9830);">ODO (Odometer/Low-Speed COG filter)</span>
<span class="t" style="left:2.10px;top:163.70px;font-size:12px;line-height:14.00px;color:#626262;transform:scaleX(0.9860);">PM (Power Management)</span>
<span class="t" style="left:2.10px;top:181.70px;font-size:12px;line-height:14.00px;color:#626262;transform:scaleX(0.9786);">PM2 (Extended Power Management)</span>
<span class="t" style="left:2.10px;top:199.70px;font-size:12px;line-height:14.00px;color:#626262;transform:scaleX(0.9704);">PMS (Power Management Setup)</span>
<span class="t" style="left:2.10px;top:217.70px;font-size:12px;line-height:14.00px;color:#626262;transform:scaleX(0.8999);">PRT (Ports)</span>
<span class="t" style="left:2.10px;top:235.70px;font-size:12px;line-height:14.00px;color:#626262;transform:scaleX(0.9273);">PWR (Power)</span>
<span class="t" style="left:2.10px;top:253.70px;font-size:12px;line-height:14.00px;color:#626262;transform:scaleX(0.8836);">RATE (Rates)</span>
<span class="t" style="left:2.10px;top:271.70px;font-size:12px;line-height:14.00px;color:#626262;transform:scaleX(0.9636);">RINV (Remote Inventory)</span>
<span class="t" style="left:2.10px;top:289.70px;font-size:12px;line-height:14.00px;color:#626262;transform:scaleX(0.8517);">RST (Reset)</span>
<span class="t" style="left:2.10px;top:307.70px;font-size:12px;line-height:14.00px;color:#626262;transform:scaleX(0.9483);">RXM (Receiver Manager)</span>
<span class="t" style="left:2.10px;top:325.70px;font-size:12px;line-height:14.00px;color:#626262;transform:scaleX(0.8906);">SBAS (SBAS Settings)</span>
<span class="t" style="left:2.10px;top:343.70px;font-size:12px;line-height:14.00px;color:#626262;transform:scaleX(0.9183);">SENIF (Sensor Interface)</span>
<span class="t" style="left:2.10px;top:361.70px;font-size:12px;line-height:14.00px;color:#626262;transform:scaleX(0.8979);">SLAS (SLAS settings)</span>
</div>
<div style="left:267px;top:34px;width:425px;height:370px;background:#f0f0f0;border-left:2px solid #6e6e6e;border-top:1px solid #8a8a8a;"></div>
<div style="left:350px;top:39px;width:228.5px;height:19px;background:#ffffff;border:1px solid #8c8c8c;border-right-color:#fff;border-bottom-color:#fff;"></div>
<div style="left:351px;top:40px;width:226.5px;height:17px;background:#ffffff;border:1px solid #6a6a6a;border-right-color:#e3e3e3;border-bottom-color:#e3e3e3;"></div>
<div style="left:559.5px;top:41px;width:17px;height:15px;background:#f0f0f0;border:1px solid #fff;border-right-color:#6e6e6e;border-bottom-color:#6e6e6e;"></div>
<svg style="left:564px;top:47px;" width="8" height="4" viewBox="0 0 8 4"><path d="M0.500 0h7L4 4z" fill="#000"/></svg>
<span class="t" style="left:354.80px;top:42.20px;font-size:12px;line-height:14.00px;color:#000;transform:scaleX(0.8714);">1 - UART1</span>
<span class="t" style="left:272.60px;top:40.50px;font-size:12px;line-height:14.00px;color:#000;transform:scaleX(0.8996);">Target</span>
<div style="left:350px;top:67px;width:228.5px;height:19px;background:#ffffff;border:1px solid #8c8c8c;border-right-color:#fff;border-bottom-color:#fff;"></div>
<div style="left:351px;top:68px;width:226.5px;height:17px;background:#ffffff;border:1px solid #6a6a6a;border-right-color:#e3e3e3;border-bottom-color:#e3e3e3;"></div>
<div style="left:559.5px;top:69px;width:17px;height:15px;background:#f0f0f0;border:1px solid #fff;border-right-color:#6e6e6e;border-bottom-color:#6e6e6e;"></div>
<svg style="left:564px;top:75px;" width="8" height="4" viewBox="0 0 8 4"><path d="M0.500 0h7L4 4z" fill="#000"/></svg>
<span class="t" style="left:354.80px;top:70.20px;font-size:12px;line-height:14.00px;color:#000;transform:scaleX(0.8750);">0+1 - UBX+NMEA</span>
<span class="t" style="left:272.60px;top:68.80px;font-size:12px;line-height:14.00px;color:#000;transform:scaleX(0.8643);">Protocol in</span>
<div style="left:350px;top:91px;width:228.5px;height:19px;background:#ffffff;border:1px solid #8c8c8c;border-right-color:#fff;border-bottom-color:#fff;"></div>
<div style="left:351px;top:92px;width:226.5px;height:17px;background:#ffffff;border:1px solid #6a6a6a;border-right-color:#e3e3e3;border-bottom-color:#e3e3e3;"></div>
<div style="left:559.5px;top:93px;width:17px;height:15px;background:#f0f0f0;border:1px solid #fff;border-right-color:#6e6e6e;border-bottom-color:#6e6e6e;"></div>
<svg style="left:564px;top:99px;" width="8" height="4" viewBox="0 0 8 4"><path d="M0.500 0h7L4 4z" fill="#000"/></svg>
<span class="t" style="left:354.80px;top:94.20px;font-size:12px;line-height:14.00px;color:#000;transform:scaleX(0.8688);">0 - UBX</span>
<span class="t" style="left:272.60px;top:92.50px;font-size:12px;line-height:14.00px;color:#000;transform:scaleX(0.8792);">Protocol out</span>
<div style="left:350px;top:120px;width:228.5px;height:18.5px;background:#ffffff;border:1px solid #8c8c8c;border-right-color:#fff;border-bottom-color:#fff;"></div>
<div style="left:351px;top:121px;width:226.5px;height:16.5px;background:#ffffff;border:1px solid #6a6a6a;border-right-color:#e3e3e3;border-bottom-color:#e3e3e3;"></div>
<div style="left:559.5px;top:122px;width:17px;height:14.5px;background:#f0f0f0;border:1px solid #fff;border-right-color:#6e6e6e;border-bottom-color:#6e6e6e;"></div>
<svg style="left:564px;top:127.75px;" width="8" height="4" viewBox="0 0 8 4"><path d="M0.500 0h7L4 4z" fill="#000"/></svg>
<div style="left:353px;top:123px;width:205.5px;height:12.5px;background:#0078d7;outline:1px dotted #ffd;outline-offset:-1px;"></div>
<span class="t" style="left:354.80px;top:123.20px;font-size:12px;line-height:14.00px;color:#e8ffff;transform:scaleX(0.8841);">57600</span>
<span class="t" style="left:272.60px;top:123.30px;font-size:12px;line-height:14.00px;color:#000;transform:scaleX(0.8706);">Baudrate</span>
<div style="left:350px;top:167px;width:228.5px;height:19px;background:#ffffff;border:1px solid #8c8c8c;border-right-color:#fff;border-bottom-color:#fff;"></div>
<div style="left:351px;top:168px;width:226.5px;height:17px;background:#ffffff;border:1px solid #6a6a6a;border-right-color:#e3e3e3;border-bottom-color:#e3e3e3;"></div>
<div style="left:559.5px;top:169px;width:17px;height:15px;background:#f0f0f0;border:1px solid #fff;border-right-color:#6e6e6e;border-bottom-color:#6e6e6e;"></div>
<svg style="left:564px;top:175px;" width="8" height="4" viewBox="0 0 8 4"><path d="M0.500 0h7L4 4z" fill="#000"/></svg>
<span class="t" style="left:354.80px;top:170.20px;font-size:12px;line-height:14.00px;color:#000;transform:scaleX(1.0020);">8</span>
<span class="t" style="left:272.60px;top:170.50px;font-size:12px;line-height:14.00px;color:#000;transform:scaleX(0.8769);">Databits</span>
<div style="left:350px;top:192px;width:228.5px;height:19px;background:#ffffff;border:1px solid #8c8c8c;border-right-color:#fff;border-bottom-color:#fff;"></div>
<div style="left:351px;top:193px;width:226.5px;height:17px;background:#ffffff;border:1px solid #6a6a6a;border-right-color:#e3e3e3;border-bottom-color:#e3e3e3;"></div>
<div style="left:559.5px;top:194px;width:17px;height:15px;background:#f0f0f0;border:1px solid #fff;border-right-color:#6e6e6e;border-bottom-color:#6e6e6e;"></div>
<svg style="left:564px;top:200px;" width="8" height="4" viewBox="0 0 8 4"><path d="M0.500 0h7L4 4z" fill="#000"/></svg>
<span class="t" style="left:354.80px;top:195.20px;font-size:12px;line-height:14.00px;color:#000;transform:scaleX(1.0020);">1</span>
<span class="t" style="left:272.60px;top:195.50px;font-size:12px;line-height:14.00px;color:#000;transform:scaleX(0.8718);">Stopbits</span>
<div style="left:350px;top:217.5px;width:228.5px;height:19px;background:#ffffff;border:1px solid #8c8c8c;border-right-color:#fff;border-bottom-color:#fff;"></div>
<div style="left:351px;top:218.5px;width:226.5px;height:17px;background:#ffffff;border:1px solid #6a6a6a;border-right-color:#e3e3e3;border-bottom-color:#e3e3e3;"></div>
<div style="left:559.5px;top:219.5px;width:17px;height:15px;background:#f0f0f0;border:1px solid #fff;border-right-color:#6e6e6e;border-bottom-color:#6e6e6e;"></div>
<svg style="left:564px;top:225.5px;" width="8" height="4" viewBox="0 0 8 4"><path d="M0.500 0h7L4 4z" fill="#000"/></svg>
<span class="t" style="left:354.80px;top:220.70px;font-size:12px;line-height:14.00px;color:#000;transform:scaleX(0.8785);">None</span>
<span class="t" style="left:272.60px;top:219.80px;font-size:12px;line-height:14.00px;color:#000;transform:scaleX(0.8379);">Parity</span>
<div style="left:350px;top:242px;width:228.5px;height:19px;background:#ffffff;border:1px solid #8c8c8c;border-right-color:#fff;border-bottom-color:#fff;"></div>
<div style="left:351px;top:243px;width:226.5px;height:17px;background:#ffffff;border:1px solid #6a6a6a;border-right-color:#e3e3e3;border-bottom-color:#e3e3e3;"></div>
<div style="left:559.5px;top:244px;width:17px;height:15px;background:#f0f0f0;border:1px solid #fff;border-right-color:#6e6e6e;border-bottom-color:#6e6e6e;"></div>
<svg style="left:564px;top:250px;" width="8" height="4" viewBox="0 0 8 4"><path d="M0.500 0h7L4 4z" fill="#000"/></svg>
<span class="t" style="left:354.80px;top:245.20px;font-size:12px;line-height:14.00px;color:#000;transform:scaleX(0.8310);">LSB First</span>
<span class="t" style="left:272.60px;top:244.00px;font-size:12px;line-height:14.00px;color:#000;transform:scaleX(0.8436);">Bit Order</span>
<div style="left:272px;top:348px;width:13px;height:13px;background:#ffffff;border:1px solid #8c8c8c;border-right-color:#fff;border-bottom-color:#fff;"></div>
<div style="left:273px;top:349px;width:11px;height:11px;background:#ffffff;border:1px solid #6a6a6a;border-right-color:#e3e3e3;border-bottom-color:#e3e3e3;"></div>
<span class="t" style="left:290.00px;top:348.00px;font-size:12px;line-height:14.00px;color:#000;transform:scaleX(0.8845);">Extended TX timeout (&gt;=FW7.00)</span>
<div style="left:272px;top:374px;width:172px;height:40px;border:1px solid #a0a0a0;box-shadow:1px 1px 0 #fff, inset 1px 1px 0 #fff;"></div>
<div style="left:279px;top:367px;width:150px;height:14px;background:#f0f0f0;"></div>
<span class="t" style="left:281.50px;top:366.30px;font-size:12px;line-height:14.00px;color:#000;transform:scaleX(0.8792);">TX-Ready Feature (&gt;=FW7.00)</span>
<div style="left:284px;top:384px;width:13px;height:13px;background:#ffffff;border:1px solid #8c8c8c;border-right-color:#fff;border-bottom-color:#fff;"></div>
<div style="left:285px;top:385px;width:11px;height:11px;background:#ffffff;border:1px solid #6a6a6a;border-right-color:#e3e3e3;border-bottom-color:#e3e3e3;"></div>
<span class="t" style="left:302.50px;top:384.00px;font-size:12px;line-height:14.00px;color:#000;transform:scaleX(0.8698);">Enable</span>
<div style="left:10px;top:403px;width:682px;height:25px;background:#f0f0f0;"></div>
<div style="left:243px;top:408px;width:449px;height:18px;background:#f0f0f0;border-top:2px solid #6e6e6e;border-left:2px solid #6e6e6e;"></div>
<svg style="left:12px;top:409.5px;" width="16" height="16" viewBox="0 0 16 16"><path d="M5 8V5a3.200 3.200 0 0 1 6.400 0v1" fill="none" stroke="#000" stroke-width="2.600"/><path d="M5 8V5a3.200 3.200 0 0 1 6.400 0v1" fill="none" stroke="#f0f020" stroke-width="1"/><rect x="2" y="8" width="11.500" height="7" rx="1" fill="#f2f21a" stroke="#000" stroke-width="1.200"/><rect x="7" y="10" width="1.800" height="3" fill="#000"/></svg>
<div style="left:35px;top:408px;width:1px;height:18px;background:#a8a8a8;"></div>
<div style="left:36px;top:408px;width:1px;height:18px;background:#fff;"></div>
<svg style="left:41.5px;top:409.5px;" width="16" height="16" viewBox="0 0 16 16"><path d="M1.500 2.500l12 12" stroke="#c01818" stroke-width="2.200"/><path d="M14 1.500C10 5 5 10 1.500 14.500" fill="none" stroke="#c01818" stroke-width="1.800"/></svg>
<svg style="left:71px;top:409.5px;" width="16" height="16" viewBox="0 0 16 16"><path d="M5.500 2.500h7l2.500 2.500v10h-9.500z" fill="#fff" stroke="#222"/><path d="M7 6h6M7 8.500h6M7 11h6M7 13h6" stroke="#2030c0" stroke-width="1.300"/><path d="M1 5.500h3M1 8h3M1 10.500h3M1 13h3" stroke="#000" stroke-width="1.200" stroke-dasharray="1.500 1"/></svg>
<svg style="left:94.5px;top:409.5px;" width="16" height="16" viewBox="0 0 16 16"><rect x="7.500" y="1" width="6" height="6" fill="#e8f0ff" stroke="#444"/><path d="M9 4l1.500 2 4-5" fill="none" stroke="#102060" stroke-width="1.400"/><path d="M0.500 15v-5.500h3.500l2 2v3.500z" fill="#fff" stroke="#000" stroke-width="1.100"/><path d="M1 4h2M1 6.500h2M8 11.500h2.500M8 14h2.500" stroke="#000" stroke-width="1.200"/></svg>
<div style="left:114.5px;top:407px;width:22px;height:20.5px;background:#fafafa;border-top:1px solid #a0a0a0;border-left:1px solid #a0a0a0;border-right:1px solid #fff;"></div>
<svg style="left:118.5px;top:410.5px;" width="16" height="16" viewBox="0 0 16 16"><rect x="6.500" y="1" width="6" height="6" fill="#e8f0ff" stroke="#444"/><path d="M8 4l1.500 2 4.500-5" fill="none" stroke="#102060" stroke-width="1.400"/><path d="M0.500 15v-5.500h3.500l2 2v3.500z" fill="#fff" stroke="#000" stroke-width="1.100"/><path d="M9 9l6 6" stroke="#000" stroke-width="2.200"/><path d="M2 2.500v2M1 3.500h2M4.500 5v2M3.500 6h2" stroke="#6040a0" stroke-width="0.900"/></svg>
<div style="left:139px;top:408px;width:1px;height:18px;background:#a8a8a8;"></div>
<div style="left:140px;top:408px;width:1px;height:18px;background:#fff;"></div>
<svg style="left:146px;top:409.5px;" width="16" height="16" viewBox="0 0 16 16"><path d="M6.500 1.500h6l2.500 2.500v9.500h-8.500z" fill="#fff" stroke="#000" stroke-width="1.200"/><path d="M10 6h4M10 8.500h4M10 11h4" stroke="#2030a0" stroke-width="1.200"/><rect x="1" y="5.500" width="8" height="9" rx="1" fill="#e8e8e8" stroke="#000" stroke-width="1.400"/><path d="M3.500 12.500V8h2a1.300 1.300 0 0 1 0 2.600H3.500" fill="none" stroke="#000" stroke-width="1.200"/></svg>
<svg style="left:169px;top:409.5px;" width="16" height="16" viewBox="0 0 16 16"><rect x="1" y="1" width="14" height="13" fill="#fff" stroke="#bbb"/><path d="M6.500 1v13M1 9h14" stroke="#bbb"/><path d="M8.500 3h5.500M8.500 5.500h5.500M8.500 7.500h5.500" stroke="#c02020" stroke-width="1.200"/><path d="M7 3h1M7 5.500h1" stroke="#20a040" stroke-width="1.200"/><path d="M6 6.500H1.500M3.500 4l-2.500 2.500 2.500 2.500" fill="none" stroke="#000" stroke-width="1.500"/><path d="M10.500 9v5.500M8 12l2.500 2.500L13 12" fill="none" stroke="#000" stroke-width="1.500"/></svg>
<svg style="left:193px;top:409.5px;" width="16" height="16" viewBox="0 0 16 16"><rect x="1" y="1" width="14" height="14" fill="#f4f4f4" stroke="#b0b0b0"/><path d="M5.500 1v14M5.500 10h9.500" stroke="#b0b0b0"/><path d="M7.500 3.500h6M7.500 5.500h6M7.500 7.500h6" stroke="#b8b8b8"/><path d="M10.500 10.500v4M8 12.500l2.500 2 2.500-2" fill="none" stroke="#b0b0b0" stroke-width="1.200"/></svg>
<div style="left:214px;top:408px;width:1px;height:18px;background:#a8a8a8;"></div>
<div style="left:215px;top:408px;width:1px;height:18px;background:#fff;"></div>
<svg style="left:221px;top:409.5px;" width="16" height="16" viewBox="0 0 16 16"><rect x="0" y="0.500" width="12.500" height="9.500" fill="#000"/><path d="M1.500 3.500h5M1.500 5.500h5M1.500 7.500h5M8 4v4M10.500 4v4" stroke="#fff" stroke-width="1"/><path d="M5.500 15.500V8.500h2.500v2h3.500v-2H14.500v7z" fill="#000"/><rect x="6.800" y="13" width="1.500" height="1.500" fill="#fff"/><rect x="12" y="13" width="1.500" height="1.500" fill="#fff"/></svg>
</div>
<div style="left:645px;top:109px;width:345px;height:430px;background:#f0f0f0;"></div>
<div style="left:645px;top:109px;width:345px;height:1px;background:#ffffff;"></div>
<div style="left:644px;top:109px;width:1px;height:430px;background:#ffffff;"></div>
<div style="left:841px;top:110px;width:1px;height:429px;background:#ffffff;"></div>
<div style="left:842px;top:110px;width:1px;height:429px;background:#d0d0d0;"></div>
<div style="left:649px;top:116px;width:175px;height:2px;border-top:1px solid #fff;border-left:1px solid #fff;border-bottom:1px solid #a0a0a0;border-right:1px solid #a0a0a0;height:3px;"></div>
<div style="left:649px;top:119px;width:175px;height:2px;border-top:1px solid #fff;border-left:1px solid #fff;border-bottom:1px solid #a0a0a0;border-right:1px solid #a0a0a0;height:3px;"></div>
<svg style="left:829px;top:115px;" width="7" height="7" viewBox="0 0 7 7"><path d="M0.800 0.800l5.400 5.400M6.200 0.800l-5.400 5.400" stroke="#000" stroke-width="1.700"/></svg>
<div style="left:650px;top:127px;width:188px;height:183.5px;background:#000;border:1px solid #808080;border-right-color:#fff;border-bottom-color:#fff;"></div>
<svg style="left:650px;top:127px;" width="187" height="183" viewBox="0 0 187 183"><g fill="none" stroke="#e8e8e8" stroke-width="1"><circle cx="94.5" cy="92.3" r="81.500"/><circle cx="94.5" cy="92.3" r="40.500"/></g></svg>
<div style="left:739.5px;top:132.5px;width:10px;height:10px;background:#000;"></div>
<span class="t" style="left:740.35px;top:131.80px;font-size:11.5px;line-height:12.00px;color:#e8e8e8;transform:scaleX(1.0020);">N</span>
<div style="left:739px;top:295.5px;width:10px;height:10px;background:#000;"></div>
<span class="t" style="left:740.16px;top:294.80px;font-size:11.5px;line-height:12.00px;color:#e8e8e8;transform:scaleX(1.0020);">S</span>
<div style="left:655.5px;top:213.5px;width:10px;height:10px;background:#000;"></div>
<span class="t" style="left:655.07px;top:212.80px;font-size:11.5px;line-height:12.00px;color:#e8e8e8;transform:scaleX(1.0020);">W</span>
<div style="left:819.5px;top:213.5px;width:10px;height:10px;background:#000;"></div>
<span class="t" style="left:820.66px;top:212.80px;font-size:11.5px;line-height:12.00px;color:#e8e8e8;transform:scaleX(1.0020);">E</span>
<svg style="left:672px;top:156.5px;" width="20" height="23" viewBox="0 0 20 23"><path d="M0 4h20v9.500c0 5.500-4 9-10 9s-10-3.500-10-9z" fill="#cc0a0a"/><rect width="20" height="10" fill="#f4d8d8"/><path d="M0 1.500h20M0 4.500h20M0 7.500h20" stroke="#c83a3a" stroke-width="1.400"/><rect width="8" height="6" fill="#5a5a8c"/></svg>
<span class="t" style="left:672.22px;top:165.20px;font-size:11px;line-height:12.00px;color:#ffffff;transform:scaleX(0.9700);">G12</span>
<svg style="left:691px;top:135px;" width="20" height="23" viewBox="0 0 20 23"><path d="M0 4h20v9.500c0 5.500-4 9-10 9s-10-3.500-10-9z" fill="#cc0a0a"/><rect width="20" height="3.500" fill="#fff"/><rect y="3.300" width="20" height="3.400" fill="#1a3ab0"/><rect y="6.600" width="20" height="3.400" fill="#d02020"/></svg>
<span class="t" style="left:691.51px;top:143.70px;font-size:11px;line-height:12.00px;color:#ffffff;transform:scaleX(0.9700);">R16</span>
<svg style="left:686px;top:174.5px;" width="20" height="23" viewBox="0 0 20 23"><path d="M0 4h20v9.500c0 5.500-4 9-10 9s-10-3.500-10-9z" fill="#18a818"/><rect width="20" height="10" fill="#f4d8d8"/><path d="M0 1.500h20M0 4.500h20M0 7.500h20" stroke="#c83a3a" stroke-width="1.400"/><rect width="8" height="6" fill="#5a5a8c"/></svg>
<span class="t" style="left:686.22px;top:183.20px;font-size:11px;line-height:12.00px;color:#c8ffc0;transform:scaleX(0.9700);">G24</span>
<svg style="left:729px;top:178.5px;" width="20" height="23" viewBox="0 0 20 23"><path d="M0 4h20v9.500c0 5.500-4 9-10 9s-10-3.500-10-9z" fill="#18a818"/><rect width="20" height="10" fill="#f4d8d8"/><path d="M0 1.500h20M0 4.500h20M0 7.500h20" stroke="#c83a3a" stroke-width="1.400"/><rect width="8" height="6" fill="#5a5a8c"/></svg>
<span class="t" style="left:729.22px;top:187.20px;font-size:11px;line-height:12.00px;color:#c8ffc0;transform:scaleX(0.9700);">G19</span>
<svg style="left:718px;top:172px;" width="20" height="23" viewBox="0 0 20 23"><path d="M0 4h20v9.500c0 5.500-4 9-10 9s-10-3.500-10-9z" fill="#18a818"/><rect width="20" height="3.500" fill="#fff"/><rect y="3.300" width="20" height="3.400" fill="#1a3ab0"/><rect y="6.600" width="20" height="3.400" fill="#d02020"/></svg>
<span class="t" style="left:718.51px;top:180.70px;font-size:11px;line-height:12.00px;color:#c8ffc0;transform:scaleX(0.9700);">R15</span>
<svg style="left:750px;top:172.5px;" width="20" height="23" viewBox="0 0 20 23"><path d="M0 4h20v9.500c0 5.500-4 9-10 9s-10-3.500-10-9z" fill="#18a818"/><rect width="20" height="10" fill="#f4d8d8"/><path d="M0 1.500h20M0 4.500h20M0 7.500h20" stroke="#c83a3a" stroke-width="1.400"/><rect width="8" height="6" fill="#5a5a8c"/></svg>
<span class="t" style="left:750.22px;top:181.20px;font-size:11px;line-height:12.00px;color:#c8ffc0;transform:scaleX(0.9700);">G17</span>
<svg style="left:752px;top:161px;" width="20" height="23" viewBox="0 0 20 23"><path d="M0 4h20v9.500c0 5.500-4 9-10 9s-10-3.500-10-9z" fill="#18a818"/><rect width="20" height="3.500" fill="#fff"/><rect y="3.300" width="20" height="3.400" fill="#1a3ab0"/><rect y="6.600" width="20" height="3.400" fill="#d02020"/></svg>
<span class="t" style="left:752.51px;top:169.70px;font-size:11px;line-height:12.00px;color:#c8ffc0;transform:scaleX(0.9700);">R24</span>
<svg style="left:795px;top:173px;" width="20" height="23" viewBox="0 0 20 23"><path d="M0 4h20v9.500c0 5.500-4 9-10 9s-10-3.500-10-9z" fill="#18a818"/><rect width="20" height="10" fill="#f4d8d8"/><path d="M0 1.500h20M0 4.500h20M0 7.500h20" stroke="#c83a3a" stroke-width="1.400"/><rect width="8" height="6" fill="#5a5a8c"/></svg>
<span class="t" style="left:798.18px;top:181.70px;font-size:11px;line-height:12.00px;color:#c8ffc0;transform:scaleX(0.9700);">G3</span>
<svg style="left:715px;top:199px;" width="20" height="23" viewBox="0 0 20 23"><path d="M0 4h20v9.500c0 5.500-4 9-10 9s-10-3.500-10-9z" fill="#18a818"/><rect width="20" height="3.500" fill="#fff"/><rect y="3.300" width="20" height="3.400" fill="#1a3ab0"/><rect y="6.600" width="20" height="3.400" fill="#d02020"/></svg>
<span class="t" style="left:715.51px;top:207.70px;font-size:11px;line-height:12.00px;color:#c8ffc0;transform:scaleX(0.9700);">R17</span>
<svg style="left:731.5px;top:220px;" width="20" height="23" viewBox="0 0 20 23"><path d="M0 4h20v9.500c0 5.500-4 9-10 9s-10-3.500-10-9z" fill="#18a818"/><rect width="20" height="10" fill="#f4d8d8"/><path d="M0 1.500h20M0 4.500h20M0 7.500h20" stroke="#c83a3a" stroke-width="1.400"/><rect width="8" height="6" fill="#5a5a8c"/></svg>
<span class="t" style="left:734.68px;top:228.70px;font-size:11px;line-height:12.00px;color:#c8ffc0;transform:scaleX(0.9700);">G6</span>
<svg style="left:748px;top:216px;" width="20" height="23" viewBox="0 0 20 23"><path d="M0 4h20v9.500c0 5.500-4 9-10 9s-10-3.500-10-9z" fill="#18a818"/><rect width="20" height="3.500" fill="#fff"/><rect y="3.300" width="20" height="3.400" fill="#1a3ab0"/><rect y="6.600" width="20" height="3.400" fill="#d02020"/></svg>
<span class="t" style="left:748.51px;top:224.70px;font-size:11px;line-height:12.00px;color:#c8ffc0;transform:scaleX(0.9700);">R14</span>
<svg style="left:774.5px;top:215.5px;" width="20" height="23" viewBox="0 0 20 23"><path d="M0 4h20v9.500c0 5.500-4 9-10 9s-10-3.500-10-9z" fill="#18a818"/><rect width="20" height="10" fill="#f4d8d8"/><path d="M0 1.500h20M0 4.500h20M0 7.500h20" stroke="#c83a3a" stroke-width="1.400"/><rect width="8" height="6" fill="#5a5a8c"/></svg>
<span class="t" style="left:774.72px;top:224.20px;font-size:11px;line-height:12.00px;color:#c8ffc0;transform:scaleX(0.9700);">G14</span>
<svg style="left:687.5px;top:239.5px;" width="20" height="23" viewBox="0 0 20 23"><path d="M0 4h20v9.500c0 5.500-4 9-10 9s-10-3.500-10-9z" fill="#cc0a0a"/><rect width="20" height="3.500" fill="#fff"/><rect y="3.300" width="20" height="3.400" fill="#1a3ab0"/><rect y="6.600" width="20" height="3.400" fill="#d02020"/></svg>
<span class="t" style="left:688.01px;top:248.20px;font-size:11px;line-height:12.00px;color:#ffffff;transform:scaleX(0.9700);">R18</span>
<div style="left:700px;top:240px;width:27px;height:15px;background:#cc0a0a;border-radius:7px;"></div>
<span class="t" style="left:700.66px;top:241.70px;font-size:11px;line-height:12.00px;color:#ffffff;transform:scaleX(1.0020);">S135</span>
<span class="t" style="left:698.00px;top:241.00px;font-size:11px;line-height:12.00px;color:#30c030;transform:scaleX(1.0020);">S</span>
<div style="left:722px;top:244px;width:27px;height:15px;background:#cc0a0a;border-radius:7px;"></div>
<span class="t" style="left:722.66px;top:245.70px;font-size:11px;line-height:12.00px;color:#ffffff;transform:scaleX(1.0020);">S138</span>
<svg style="left:677px;top:257px;" width="20" height="23" viewBox="0 0 20 23"><path d="M0 4h20v9.500c0 5.500-4 9-10 9s-10-3.500-10-9z" fill="#cc0a0a"/><rect width="20" height="10" fill="#f4d8d8"/><path d="M0 1.500h20M0 4.500h20M0 7.500h20" stroke="#c83a3a" stroke-width="1.400"/><rect width="8" height="6" fill="#5a5a8c"/></svg>
<span class="t" style="left:677.22px;top:265.70px;font-size:11px;line-height:12.00px;color:#ffffff;transform:scaleX(0.9700);">G13</span>
<svg style="left:707px;top:255.5px;" width="20" height="23" viewBox="0 0 20 23"><path d="M0 4h20v9.500c0 5.500-4 9-10 9s-10-3.500-10-9z" fill="#18a818"/><rect width="20" height="10" fill="#f4d8d8"/><path d="M0 1.500h20M0 4.500h20M0 7.500h20" stroke="#c83a3a" stroke-width="1.400"/><rect width="8" height="6" fill="#5a5a8c"/></svg>
<span class="t" style="left:707.61px;top:264.20px;font-size:11px;line-height:12.00px;color:#c8ffc0;transform:scaleX(0.9700);">G11</span>
<svg style="left:775px;top:262px;" width="20" height="23" viewBox="0 0 20 23"><path d="M0 4h20v9.500c0 5.500-4 9-10 9s-10-3.500-10-9z" fill="#cc0a0a"/><rect width="20" height="3.500" fill="#fff"/><rect y="3.300" width="20" height="3.400" fill="#1a3ab0"/><rect y="6.600" width="20" height="3.400" fill="#d02020"/></svg>
<span class="t" style="left:775.51px;top:270.70px;font-size:11px;line-height:12.00px;color:#ffffff;transform:scaleX(0.9700);">R13</span>
<svg style="left:753.5px;top:274px;" width="20" height="23" viewBox="0 0 20 23"><path d="M0 4h20v9.500c0 5.500-4 9-10 9s-10-3.500-10-9z" fill="#cc0a0a"/><rect width="20" height="10" fill="#f4d8d8"/><path d="M0 1.500h20M0 4.500h20M0 7.500h20" stroke="#c83a3a" stroke-width="1.400"/><rect width="8" height="6" fill="#5a5a8c"/></svg>
<span class="t" style="left:753.72px;top:282.70px;font-size:11px;line-height:12.00px;color:#ffffff;transform:scaleX(0.9700);">G30</span>
<div style="left:848px;top:116px;width:125px;height:2px;border-top:1px solid #fff;border-left:1px solid #fff;border-bottom:1px solid #a0a0a0;border-right:1px solid #a0a0a0;height:3px;"></div>
<div style="left:848px;top:119px;width:125px;height:2px;border-top:1px solid #fff;border-left:1px solid #fff;border-bottom:1px solid #a0a0a0;border-right:1px solid #a0a0a0;height:3px;"></div>
<svg style="left:976.5px;top:115px;" width="7" height="7" viewBox="0 0 7 7"><path d="M0.800 0.800l5.400 5.400M6.200 0.800l-5.400 5.400" stroke="#000" stroke-width="1.700"/></svg>
<div style="left:848px;top:127px;width:138px;height:141px;background:#000;border:1px solid #808080;border-right-color:#fff;border-bottom-color:#fff;"></div>
<div style="left:848px;top:127px;width:137px;height:140px;overflow:hidden;">
<div style="left:67px;top:5.5px;width:65px;height:11.5px;background:#404040;"></div>
<span class="t" style="left:6.30px;top:6.00px;font-size:11px;line-height:12.00px;color:#e6e6e6;transform:scaleX(0.9727);">Longitude</span>
<div style="left:67px;top:18.55px;width:65px;height:11.5px;background:#404040;"></div>
<span class="t" style="left:6.30px;top:19.05px;font-size:11px;line-height:12.00px;color:#e6e6e6;transform:scaleX(1.0092);">Latitude</span>
<div style="left:67px;top:31.6px;width:65px;height:11.5px;background:#404040;"></div>
<span class="t" style="left:6.30px;top:32.10px;font-size:11px;line-height:12.00px;color:#e6e6e6;transform:scaleX(0.9540);">Altitude</span>
<div style="left:67px;top:44.65px;width:65px;height:11.5px;background:#404040;"></div>
<span class="t" style="left:6.30px;top:45.15px;font-size:11px;line-height:12.00px;color:#e6e6e6;transform:scaleX(0.9193);">Altitude (msl)</span>
<div style="left:67px;top:57.7px;width:65px;height:11.5px;background:#404040;"></div>
<span class="t" style="left:6.30px;top:58.20px;font-size:11px;line-height:12.00px;color:#e6e6e6;transform:scaleX(0.9489);">TTFF</span>
<div style="left:67px;top:70.75px;width:65px;height:11.5px;background:#404040;"></div>
<span class="t" style="left:6.30px;top:71.25px;font-size:11px;line-height:12.00px;color:#e6e6e6;transform:scaleX(0.9506);">Fix Mode</span>
<div style="left:67px;top:83.8px;width:65px;height:11.5px;background:#404040;"></div>
<span class="t" style="left:6.30px;top:84.30px;font-size:11px;line-height:12.00px;color:#e6e6e6;transform:scaleX(1.0047);">3D Acc. [m]</span>
<div style="left:67px;top:96.85px;width:65px;height:11.5px;background:#404040;"></div>
<span class="t" style="left:6.30px;top:97.35px;font-size:11px;line-height:12.00px;color:#e6e6e6;transform:scaleX(1.0047);">2D Acc. [m]</span>
<div style="left:67px;top:109.9px;width:65px;height:11.5px;background:#404040;"></div>
<span class="t" style="left:6.30px;top:110.40px;font-size:11px;line-height:12.00px;color:#e6e6e6;transform:scaleX(0.9463);">PDOP</span>
<div style="left:67px;top:122.95px;width:65px;height:11.5px;background:#404040;"></div>
<span class="t" style="left:6.30px;top:123.45px;font-size:11px;line-height:12.00px;color:#e6e6e6;transform:scaleX(0.9597);">HDOP</span>
<span class="t" style="left:6.30px;top:136.50px;font-size:11px;line-height:12.00px;color:#e6e6e6;transform:scaleX(0.9858);">Satellites</span>
<span class="t" style="left:59.50px;top:6.00px;font-size:11px;line-height:12.00px;color:#e6e6e6;transform:scaleX(0.9556);">-97.72690310 °</span>
<span class="t" style="left:63.00px;top:19.05px;font-size:11px;line-height:12.00px;color:#e6e6e6;transform:scaleX(0.9556);">30.41683070 °</span>
<span class="t" style="left:82.50px;top:32.10px;font-size:11px;line-height:12.00px;color:#e6e6e6;transform:scaleX(0.9427);">222.704 m</span>
<span class="t" style="left:82.50px;top:45.15px;font-size:11px;line-height:12.00px;color:#e6e6e6;transform:scaleX(0.9427);">246.734 m</span>
<span class="t" style="left:76.50px;top:71.25px;font-size:11px;line-height:12.00px;color:#30c840;transform:scaleX(0.9780);">3D/DGNSS</span>
<span class="t" style="left:68.50px;top:84.30px;font-size:11px;line-height:12.00px;color:#e6e6e6;transform:scaleX(0.9700);">0</span>
<div style="left:104.5px;top:84.3px;width:3px;height:10.5px;background:#20c030;"></div>
<span class="t" style="left:108.00px;top:84.30px;font-size:11px;line-height:12.00px;color:#e6e6e6;transform:scaleX(0.9700);">5.90</span>
<span class="t" style="left:119.63px;top:84.30px;font-size:11px;line-height:12.00px;color:#e6e6e6;transform:scaleX(0.9700);">10</span>
<span class="t" style="left:68.50px;top:97.35px;font-size:11px;line-height:12.00px;color:#e6e6e6;transform:scaleX(0.9700);">0</span>
<div style="left:85.5px;top:97.35px;width:3px;height:10.5px;background:#20c030;"></div>
<span class="t" style="left:90.00px;top:97.35px;font-size:11px;line-height:12.00px;color:#e6e6e6;transform:scaleX(0.9700);">3.00</span>
<span class="t" style="left:119.63px;top:97.35px;font-size:11px;line-height:12.00px;color:#e6e6e6;transform:scaleX(0.9700);">10</span>
<span class="t" style="left:68.50px;top:110.40px;font-size:11px;line-height:12.00px;color:#e6e6e6;transform:scaleX(0.9700);">0</span>
<div style="left:87.5px;top:110.4px;width:3px;height:10.5px;background:#20c030;"></div>
<span class="t" style="left:91.50px;top:110.40px;font-size:11px;line-height:12.00px;color:#e6e6e6;transform:scaleX(0.9700);">1.7</span>
<span class="t" style="left:125.57px;top:110.40px;font-size:11px;line-height:12.00px;color:#e6e6e6;transform:scaleX(0.9700);">5</span>
<span class="t" style="left:68.50px;top:123.45px;font-size:11px;line-height:12.00px;color:#e6e6e6;transform:scaleX(0.9700);">0</span>
<div style="left:78px;top:123.45px;width:3px;height:10.5px;background:#20c030;"></div>
<span class="t" style="left:81.50px;top:123.45px;font-size:11px;line-height:12.00px;color:#e6e6e6;transform:scaleX(0.9700);">0.9</span>
<span class="t" style="left:125.57px;top:123.45px;font-size:11px;line-height:12.00px;color:#e6e6e6;transform:scaleX(0.9700);">5</span>
</div>
<div style="left:848px;top:279px;width:125px;height:2px;border-top:1px solid #fff;border-left:1px solid #fff;border-bottom:1px solid #a0a0a0;border-right:1px solid #a0a0a0;height:3px;"></div>
<div style="left:848px;top:282px;width:125px;height:2px;border-top:1px solid #fff;border-left:1px solid #fff;border-bottom:1px solid #a0a0a0;border-right:1px solid #a0a0a0;height:3px;"></div>
<svg style="left:976.5px;top:278px;" width="7" height="7" viewBox="0 0 7 7"><path d="M0.800 0.800l5.400 5.400M6.200 0.800l-5.400 5.400" stroke="#000" stroke-width="1.700"/></svg>
<div style="left:848px;top:290px;width:138px;height:91px;background:#000;border:1px solid #808080;border-right-color:#fff;border-bottom-color:#fff;"></div>
<svg style="left:848px;top:291px;" width="138" height="89" viewBox="0 0 138 89"><g transform="translate(70.400,45.500) rotate(42)"><g transform="rotate(45)"><path d="M0-20.5L3.6-3.6 20.5 0 3.6 3.6 0 20.5-3.6 3.6-20.5 0-3.6-3.6z" fill="#d2d2d2"/><path d="M0-20.5L0 0-3.6-3.6zM20.5 0L0 0 3.6-3.6zM0 20.5L0 0 3.6 3.6zM-20.5 0L0 0-3.6 3.6z" fill="#4a4a4a"/></g><path d="M0-27L4.2-4.2 27 0 4.2 4.2 0 27-4.2 4.2-27 0-4.2-4.2z" fill="#d8d8d8"/><path d="M0-27L0 0-4.2-4.2zM27 0L0 0 4.2-4.2zM0 27L0 0 4.2 4.2zM-27 0L0 0-4.2 4.2z" fill="#777"/></g></svg>
<span class="t" style="left:888.16px;top:302.20px;font-size:11.5px;line-height:12.00px;color:#e6e6e6;transform:scaleX(1.0020);">S</span>
<span class="t" style="left:938.57px;top:307.20px;font-size:11.5px;line-height:12.00px;color:#e6e6e6;transform:scaleX(1.0020);">W</span>
<span class="t" style="left:884.16px;top:355.20px;font-size:11.5px;line-height:12.00px;color:#e6e6e6;transform:scaleX(1.0020);">E</span>
<span class="t" style="left:936.85px;top:358.70px;font-size:11.5px;line-height:12.00px;color:#e6e6e6;transform:scaleX(1.0020);">N</span>
<span class="t" style="left:851.50px;top:367.00px;font-size:11px;line-height:12.00px;color:#e6e6e6;transform:scaleX(0.9810);">220.54 deg</span>
<div style="left:649px;top:322px;width:175px;height:2px;border-top:1px solid #fff;border-left:1px solid #fff;border-bottom:1px solid #a0a0a0;border-right:1px solid #a0a0a0;height:3px;"></div>
<div style="left:649px;top:325px;width:175px;height:2px;border-top:1px solid #fff;border-left:1px solid #fff;border-bottom:1px solid #a0a0a0;border-right:1px solid #a0a0a0;height:3px;"></div>
<svg style="left:829px;top:321px;" width="7" height="7" viewBox="0 0 7 7"><path d="M0.800 0.800l5.400 5.400M6.200 0.800l-5.400 5.400" stroke="#000" stroke-width="1.700"/></svg>
<div style="left:650px;top:333px;width:188px;height:185px;background:#000;border:1px solid #808080;border-right-color:#fff;border-bottom-color:#fff;"></div>
<svg style="left:650px;top:334px;" width="187" height="183" viewBox="0 0 187 183"><path d="M1 18.5H167" stroke="#e0e0e0" stroke-width="1" stroke-dasharray="3 2"/><path d="M1 51.5H167" stroke="#e0e0e0" stroke-width="1" stroke-dasharray="3 2"/><path d="M1 84.5H167" stroke="#e0e0e0" stroke-width="1" stroke-dasharray="3 2"/><path d="M1 118.5H167" stroke="#e0e0e0" stroke-width="1" stroke-dasharray="3 2"/><path d="M1 151.5H167" stroke="#e0e0e0" stroke-width="1" stroke-dasharray="3 2"/></svg>
<span class="t" style="left:820.50px;top:345.70px;font-size:12px;line-height:14.00px;color:#e6e6e6;font-weight:bold;transform:scaleX(1.1614);">50</span>
<span class="t" style="left:820.50px;top:378.70px;font-size:12px;line-height:14.00px;color:#e6e6e6;font-weight:bold;transform:scaleX(1.1614);">40</span>
<span class="t" style="left:820.50px;top:412.20px;font-size:12px;line-height:14.00px;color:#e6e6e6;font-weight:bold;transform:scaleX(1.1614);">30</span>
<span class="t" style="left:820.50px;top:445.70px;font-size:12px;line-height:14.00px;color:#e6e6e6;font-weight:bold;transform:scaleX(1.1614);">20</span>
<span class="t" style="left:820.50px;top:478.70px;font-size:12px;line-height:14.00px;color:#e6e6e6;font-weight:bold;transform:scaleX(1.1614);">10</span>
<span class="t" style="left:820.50px;top:502.50px;font-size:12px;line-height:14.00px;color:#e6e6e6;font-weight:bold;transform:scaleX(1.0020);">dB</span>
<div style="left:649px;top:528.5px;width:175px;height:2px;border-top:1px solid #fff;border-left:1px solid #fff;border-bottom:1px solid #a0a0a0;border-right:1px solid #a0a0a0;height:3px;"></div>
<div style="left:649px;top:531.5px;width:175px;height:2px;border-top:1px solid #fff;border-left:1px solid #fff;border-bottom:1px solid #a0a0a0;border-right:1px solid #a0a0a0;height:3px;"></div>
<svg style="left:829px;top:527.5px;" width="7" height="7" viewBox="0 0 7 7"><path d="M0.800 0.800l5.400 5.400M6.200 0.800l-5.400 5.400" stroke="#000" stroke-width="1.700"/></svg>
<div style="left:848px;top:392.5px;width:125px;height:2px;border-top:1px solid #fff;border-left:1px solid #fff;border-bottom:1px solid #a0a0a0;border-right:1px solid #a0a0a0;height:3px;"></div>
<div style="left:848px;top:395.5px;width:125px;height:2px;border-top:1px solid #fff;border-left:1px solid #fff;border-bottom:1px solid #a0a0a0;border-right:1px solid #a0a0a0;height:3px;"></div>
<svg style="left:976.5px;top:391.5px;" width="7" height="7" viewBox="0 0 7 7"><path d="M0.800 0.800l5.400 5.400M6.200 0.800l-5.400 5.400" stroke="#000" stroke-width="1.700"/></svg>
<div style="left:848px;top:403.5px;width:138px;height:92.5px;background:#000;border:1px solid #808080;border-right-color:#fff;border-bottom-color:#fff;"></div>
<svg style="left:848px;top:404px;" width="138" height="92" viewBox="0 0 138 92"><path d="M54.80 60.20L50.56 64.44" stroke="#e0e0e0" stroke-width="1.2"/><path d="M50.69 58.35L48.21 60.03" stroke="#e0e0e0" stroke-width="0.9"/><path d="M48.65 54.64L45.90 55.83" stroke="#e0e0e0" stroke-width="0.9"/><path d="M47.34 50.61L44.41 51.26" stroke="#e0e0e0" stroke-width="0.9"/><path d="M46.81 46.41L43.81 46.50" stroke="#e0e0e0" stroke-width="0.9"/><path d="M49.05 42.49L43.13 41.55" stroke="#e0e0e0" stroke-width="1.2"/><path d="M48.13 38.08L45.31 37.06" stroke="#e0e0e0" stroke-width="0.9"/><path d="M49.93 34.25L47.35 32.72" stroke="#e0e0e0" stroke-width="0.9"/><path d="M52.42 30.82L50.17 28.84" stroke="#e0e0e0" stroke-width="0.9"/><path d="M55.51 27.92L53.67 25.55" stroke="#e0e0e0" stroke-width="0.9"/><path d="M59.99 27.43L57.27 22.09" stroke="#e0e0e0" stroke-width="1.2"/><path d="M63.02 24.09L62.19 21.21" stroke="#e0e0e0" stroke-width="0.9"/><path d="M67.18 23.30L66.90 20.31" stroke="#e0e0e0" stroke-width="0.9"/><path d="M71.42 23.30L71.70 20.31" stroke="#e0e0e0" stroke-width="0.9"/><path d="M75.58 24.09L76.41 21.21" stroke="#e0e0e0" stroke-width="0.9"/><path d="M78.61 27.43L81.33 22.09" stroke="#e0e0e0" stroke-width="1.2"/><path d="M83.09 27.92L84.93 25.55" stroke="#e0e0e0" stroke-width="0.9"/><path d="M86.18 30.82L88.43 28.84" stroke="#e0e0e0" stroke-width="0.9"/><path d="M88.67 34.25L91.25 32.72" stroke="#e0e0e0" stroke-width="0.9"/><path d="M90.47 38.08L93.29 37.06" stroke="#e0e0e0" stroke-width="0.9"/><path d="M89.55 42.49L95.47 41.55" stroke="#e0e0e0" stroke-width="1.2"/><path d="M91.79 46.41L94.79 46.50" stroke="#e0e0e0" stroke-width="0.9"/><path d="M91.26 50.61L94.19 51.26" stroke="#e0e0e0" stroke-width="0.9"/><path d="M89.95 54.64L92.70 55.83" stroke="#e0e0e0" stroke-width="0.9"/><path d="M87.91 58.35L90.39 60.03" stroke="#e0e0e0" stroke-width="0.9"/><path d="M83.80 60.20L88.04 64.44" stroke="#e0e0e0" stroke-width="1.2"/><path d="M66.80 48.20L48.80 65.20" stroke="#e8e8e8" stroke-width="1.600"/><circle cx="69.3" cy="45.7" r="3.300" fill="#000" stroke="#e8e8e8" stroke-width="1.600"/></svg>
<span class="t" style="left:893.28px;top:413.50px;font-size:11px;line-height:12.00px;color:#e6e6e6;transform:scaleX(0.9500);">100</span>
<span class="t" style="left:923.78px;top:413.50px;font-size:11px;line-height:12.00px;color:#e6e6e6;transform:scaleX(0.9500);">150</span>
<span class="t" style="left:877.19px;top:440.00px;font-size:11px;line-height:12.00px;color:#e6e6e6;transform:scaleX(0.9500);">50</span>
<span class="t" style="left:942.28px;top:440.00px;font-size:11px;line-height:12.00px;color:#e6e6e6;transform:scaleX(0.9500);">200</span>
<span class="t" style="left:891.09px;top:468.00px;font-size:11px;line-height:12.00px;color:#e6e6e6;transform:scaleX(0.9500);">0</span>
<span class="t" style="left:932.78px;top:468.00px;font-size:11px;line-height:12.00px;color:#e6e6e6;transform:scaleX(0.9500);">250</span>
<span class="t" style="left:868.00px;top:481.00px;font-size:11px;line-height:12.00px;color:#e6e6e6;transform:scaleX(1.0020);">0.24 m/s = 0.9 km/h</span>
<div style="left:848px;top:506.5px;width:125px;height:2px;border-top:1px solid #fff;border-left:1px solid #fff;border-bottom:1px solid #a0a0a0;border-right:1px solid #a0a0a0;height:3px;"></div>
<div style="left:848px;top:509.5px;width:125px;height:2px;border-top:1px solid #fff;border-left:1px solid #fff;border-bottom:1px solid #a0a0a0;border-right:1px solid #a0a0a0;height:3px;"></div>
<svg style="left:976.5px;top:505.5px;" width="7" height="7" viewBox="0 0 7 7"><path d="M0.800 0.800l5.400 5.400M6.200 0.800l-5.400 5.400" stroke="#000" stroke-width="1.700"/></svg>
<div style="left:848px;top:517px;width:138px;height:32px;background:#000;border:1px solid #808080;border-right-color:#fff;border-bottom-color:#fff;"></div>
<span class="t" style="left:914.44px;top:524.00px;font-size:11px;line-height:12.00px;color:#e6e6e6;transform:scaleX(1.0020);">0</span>
<span class="t" style="left:893.94px;top:531.00px;font-size:11px;line-height:12.00px;color:#e6e6e6;transform:scaleX(1.0020);">9</span>
<span class="t" style="left:932.94px;top:531.00px;font-size:11px;line-height:12.00px;color:#e6e6e6;transform:scaleX(1.0020);">1</span>
<div style="left:646px;top:314px;width:196px;height:1px;background:#dcdcdc;"></div>
<div style="left:646px;top:315px;width:196px;height:2px;background:#ffffff;"></div>
<div style="left:646px;top:521px;width:196px;height:1px;background:#dcdcdc;"></div>
<div style="left:646px;top:522px;width:196px;height:2px;background:#ffffff;"></div>
<div style="left:843px;top:271.5px;width:147px;height:1px;background:#dcdcdc;"></div>
<div style="left:843px;top:272.5px;width:147px;height:2px;background:#ffffff;"></div>
<div style="left:843px;top:385px;width:147px;height:1px;background:#dcdcdc;"></div>
<div style="left:843px;top:386px;width:147px;height:2px;background:#ffffff;"></div>
<div style="left:843px;top:499px;width:147px;height:1px;background:#dcdcdc;"></div>
<div style="left:843px;top:500px;width:147px;height:2px;background:#ffffff;"></div>
<div style="left:917px;top:535px;width:1px;height:4px;background:#e0e0e0;"></div>
<div style="left:990px;top:0px;width:278px;height:539px;background:#ffffff;"></div>
<div style="left:990px;top:287px;width:278px;height:252px;background:#f0f0f0;"></div>
<div style="left:990px;top:0;width:278px;height:539px;overflow:hidden;">
<svg style="left:150px;top:246px;" width="120" height="12" viewBox="0 0 120 12"><path d="M8 5.500h10" stroke="#777"/><rect x="53.500" y="-1.500" width="9" height="9" fill="none" stroke="#777"/><path d="M99 0l10 10M109 0l-10 10" stroke="#777" stroke-width="1"/></svg>
<div style="left:-5px;top:304px;width:273px;height:240px;border:1px solid #dcdcdc;"></div>
<div style="left:0px;top:297px;width:164px;height:14px;background:#f0f0f0;"></div>
<span class="t" style="left:2.50px;top:297.00px;font-size:12px;line-height:14.00px;color:#000;transform:scaleX(0.8927);">can.protocol.debug.LogMessage)</span>
<div style="left:-2px;top:321px;width:27px;height:22px;background:#e1e1e1;border:1px solid #adadad;"></div>
<svg style="left:6px;top:326px;" width="13" height="13" viewBox="0 0 13 13"><path d="M0.500 0.500h12l-4.500 5.500v6.500l-3-1.500v-5z" fill="#000"/></svg>
<div style="left:184.5px;top:321px;width:72.5px;height:22px;background:#cccccc;border:1px solid #c3c3c3;"></div>
<svg style="left:208px;top:326px;" width="14" height="12" viewBox="0 0 14 12"><path d="M3.500 1.500h10M3.500 4.500h10M3.500 7.500h10M3.500 10.500h10" stroke="#7a7a7a" stroke-width="1.600"/><path d="M0 1.500h2M0 4.500h2M0 7.500h2M0 10.500h2" stroke="#7a7a7a" stroke-width="1.600"/></svg>
<span class="t" style="left:226.00px;top:326.50px;font-size:12px;line-height:14.00px;color:#8a8a8a;transform:scaleX(1.0020);">4</span>
<div style="left:-5px;top:351px;width:264px;height:200px;background:#ffffff;border:1px solid #b9b9b9;"></div>
<div style="left:14px;top:352px;width:1px;height:22px;background:#e5e5e5;"></div>
<div style="left:60px;top:352px;width:1px;height:22px;background:#e5e5e5;"></div>
<span class="t" style="left:1.00px;top:356.00px;font-size:12px;line-height:14.00px;color:#000;transform:scaleX(0.8566);">el</span>
<span class="t" style="left:19.00px;top:356.00px;font-size:12px;line-height:14.00px;color:#000;transform:scaleX(0.9469);">Source</span>
<span class="t" style="left:149.25px;top:356.00px;font-size:12px;line-height:14.00px;color:#000;transform:scaleX(0.9315);">Text</span>
<div style="left:-4px;top:405px;width:262px;height:33px;background:#f5f5f5;"></div>
<div style="left:-4px;top:462px;width:262px;height:33px;background:#f5f5f5;"></div>
<span class="t" style="left:64.50px;top:375.80px;font-size:12px;line-height:14.00px;color:#000;transform:scaleX(0.9428);">u-blox 1 HW: 00080000 SW: ROM</span>
<span class="t" style="left:64.50px;top:390.40px;font-size:12px;line-height:14.00px;color:#000;transform:scaleX(0.8871);">CORE 3.01 (107888)</span>
<span class="t" style="left:64.50px;top:407.60px;font-size:12px;line-height:14.00px;color:#000;transform:scaleX(0.9376);">GPS 1: detected as u-blox at 230400</span>
<span class="t" style="left:64.50px;top:422.30px;font-size:12px;line-height:14.00px;color:#000;transform:scaleX(0.9553);">baud</span>
<span class="t" style="left:64.50px;top:443.00px;font-size:12px;line-height:14.00px;color:#000;transform:scaleX(0.9759);">GPS 1: u-blox saving config</span>
<span class="t" style="left:64.50px;top:462.30px;font-size:12px;line-height:14.00px;color:#000;transform:scaleX(0.9428);">u-blox 1 HW: 00080000 SW: ROM</span>
<span class="t" style="left:64.50px;top:477.30px;font-size:12px;line-height:14.00px;color:#000;transform:scaleX(0.8871);">CORE 3.01 (107888)</span>
<span class="t" style="left:0.50px;top:383.00px;font-size:12px;line-height:14.00px;color:#000;transform:scaleX(0.7500);">JG</span>
<span class="t" style="left:0.50px;top:415.50px;font-size:12px;line-height:14.00px;color:#000;transform:scaleX(0.7500);">JG</span>
<span class="t" style="left:0.50px;top:443.00px;font-size:12px;line-height:14.00px;color:#000;transform:scaleX(0.7500);">JG</span>
<span class="t" style="left:0.50px;top:471.00px;font-size:12px;line-height:14.00px;color:#000;transform:scaleX(0.7500);">JG</span>
</div>
<div style="left:990px;top:247px;width:9px;height:292px;background:linear-gradient(90deg,rgba(0,0,0,0.22),rgba(0,0,0,0.06) 50%,rgba(0,0,0,0));"></div>
<div style="left:989.5px;top:247px;width:1px;height:292px;background:#b0b0b0;"></div>
<div style="left:1268px;top:247px;width:127px;height:292px;overflow:hidden;background:#6b6b55;"><svg style="left:0;top:0" width="127" height="292" viewBox="0 0 127 292"><defs><filter id="bl" x="-10%" y="-10%" width="120%" height="120%"><feGaussianBlur stdDeviation="1.100"/></filter><filter id="bl2"><feGaussianBlur stdDeviation="3"/></filter><filter id="nz" x="0" y="0" width="100%" height="100%"><feTurbulence type="fractalNoise" baseFrequency="0.140" numOctaves="3" seed="7"/><feColorMatrix type="matrix" values="0 0 0 0 0.160  0 0 0 0 0.180  0 0 0 0 0.120  1.100 1.100 0 0 -0.800"/></filter><filter id="nz2" x="0" y="0" width="100%" height="100%"><feTurbulence type="fractalNoise" baseFrequency="0.170" numOctaves="3" seed="23"/><feColorMatrix type="matrix" values="0 0 0 0 0.950  0 0 0 0 0.950  0 0 0 0 0.800  1.100 1.100 0 0 -0.900"/></filter></defs><rect width="127" height="292" fill="#686d5a"/><g filter="url(#bl2)"><polygon points="0,0 127,0 127,85 87,57 52,49 0,55" fill="#8d8b84" opacity="1"/><polygon points="0,0 127,0 127,11 0,9" fill="#8f8f8c" opacity="1"/><polygon points="0,10 127,13 127,19 0,17" fill="#888c7c" opacity="1"/><polygon points="0,29 32,37 62,46 54,53 22,48 0,44" fill="#6b6765" opacity="1"/><polygon points="0,67 22,69 33,103 23,146 0,149" fill="#837e70" opacity="1"/><ellipse cx="77" cy="103" rx="45" ry="38" fill="#5c624e" opacity="1"/><ellipse cx="77" cy="173" rx="52" ry="22" fill="#666c56" opacity="1"/><ellipse cx="32" cy="185" rx="30" ry="10" fill="#6e7458" opacity="1"/><polygon points="0,143 52,141 48,162 0,164" fill="#97a56c" opacity="1"/><polygon points="0,164 48,162 50,167 0,169" fill="#a8a88c" opacity="1"/><polygon points="0,173 62,177 58,209 0,213" fill="#868c68" opacity="1"/><polygon points="0,211 28,208 22,239 0,247" fill="#727c4c" opacity="1"/><polygon points="18,211 72,203 108,221 110,271 72,275 32,258 12,241" fill="#9aa962" opacity="1"/><ellipse cx="67" cy="245" rx="26" ry="18" fill="#a0b061" opacity="1"/><polygon points="0,253 32,265 77,292 0,292" fill="#a69e86" opacity="1"/><polygon points="70,267 118,259 122,292 77,292" fill="#606b42" opacity="1"/><polygon points="102,193 127,195 127,243 108,241 98,215" fill="#c5c1b0" opacity="1"/><polygon points="113,249 127,246 127,292 115,292" fill="#ccc8bc" opacity="1"/></g><g filter="url(#bl)"><polygon points="0,17 28,18 28,27 0,26" fill="#d6d2c4" opacity="1"/><polygon points="26,21 66,31 66,43 26,31" fill="#e6e4da" opacity="1"/><polygon points="32,25 66,34 66,38 32,29" fill="#f4f3ee" opacity="1"/><polygon points="66,31 89,31 90,45 66,44" fill="#60657c" opacity="1"/><polygon points="96,16 127,19 127,31 98,29" fill="#d8d0b6" opacity="1"/><polygon points="110,23 117,23 117,31 110,31" fill="#6e685c" opacity="1"/><polygon points="100,41 127,43 127,52 102,50" fill="#d0d0c8" opacity="1"/><polygon points="89,39 101,41 101,51 89,49" fill="#3c424c" opacity="1"/><polygon points="115,53 127,53 127,64 116,63" fill="#a87868" opacity="1"/><polygon points="86,54 112,60 127,72 127,81 110,70 86,61" fill="#d0ccb8" opacity="1"/><polygon points="0,46 13,47 12,54 0,53" fill="#cfccc2" opacity="1"/><polygon points="68,44 94,50 92,54 68,49" fill="#c8c6ba" opacity="1"/><polygon points="0,31 28,39 28,42 0,35" fill="#8c8884" opacity="1"/><ellipse cx="4" cy="4.58" rx="2.8" ry="1.3" fill="#d4d4d0" opacity="0.85"/><ellipse cx="13" cy="4.74" rx="2.8" ry="1.3" fill="#d4d4d0" opacity="0.85"/><ellipse cx="22" cy="4.9" rx="2.8" ry="1.3" fill="#d4d4d0" opacity="0.85"/><ellipse cx="28" cy="5.06" rx="2.8" ry="1.3" fill="#d4d4d0" opacity="0.85"/><ellipse cx="37" cy="5.22" rx="2.8" ry="1.3" fill="#d4d4d0" opacity="0.85"/><ellipse cx="46" cy="5.38" rx="2.8" ry="1.3" fill="#d4d4d0" opacity="0.85"/><ellipse cx="52" cy="5.54" rx="2.8" ry="1.3" fill="#d4d4d0" opacity="0.85"/><ellipse cx="61" cy="5.7" rx="2.8" ry="1.3" fill="#d4d4d0" opacity="0.85"/><ellipse cx="70" cy="5.86" rx="2.8" ry="1.3" fill="#d4d4d0" opacity="0.85"/><ellipse cx="76" cy="6.02" rx="2.8" ry="1.3" fill="#d4d4d0" opacity="0.85"/><ellipse cx="85" cy="6.18" rx="2.8" ry="1.3" fill="#d4d4d0" opacity="0.85"/><ellipse cx="94" cy="6.34" rx="2.8" ry="1.3" fill="#d4d4d0" opacity="0.85"/><ellipse cx="100" cy="6.5" rx="2.8" ry="1.3" fill="#d4d4d0" opacity="0.85"/><ellipse cx="109" cy="6.66" rx="2.8" ry="1.3" fill="#d4d4d0" opacity="0.85"/><ellipse cx="118" cy="6.82" rx="2.8" ry="1.3" fill="#d4d4d0" opacity="0.85"/><ellipse cx="124" cy="6.98" rx="2.8" ry="1.3" fill="#d4d4d0" opacity="0.85"/><polygon points="33,99 37,101 30,115 26,128 22,127 27,113" fill="#bab69e" opacity="1"/><polygon points="0,248 4,247 79,290 77,292 72,292 0,251" fill="#5e6046" opacity="0.7"/><polygon points="0,251 4,250 77,291 75,292 64,292 0,258" fill="#d0c9b4" opacity="1"/><polygon points="0,275 32,286 44,292 0,292" fill="#c8c2b2" opacity="1"/><polygon points="0,234 32,227 48,222 50,225 34,231 0,239" fill="#aaa272" opacity="1"/><polygon points="68,186 79,188 78,194 68,192" fill="#c8bc9c" opacity="1"/><polygon points="72,193 104,197 106,201 72,198" fill="#b0aa8c" opacity="1"/><ellipse cx="9" cy="226" rx="10" ry="6" fill="#4e583a" opacity="0.8"/><ellipse cx="32" cy="193" rx="12" ry="5" fill="#4e583a" opacity="0.8"/><ellipse cx="89" cy="240" rx="8" ry="4" fill="#4e583a" opacity="0.8"/><ellipse cx="84" cy="261" rx="10" ry="4" fill="#4e583a" opacity="0.8"/><ellipse cx="108" cy="277" rx="10" ry="9" fill="#4e583a" opacity="0.8"/><ellipse cx="54" cy="201" rx="8" ry="4" fill="#4e583a" opacity="0.8"/><ellipse cx="16" cy="181" rx="10" ry="4" fill="#4e583a" opacity="0.8"/><ellipse cx="120" cy="183" rx="8" ry="8" fill="#4e583a" opacity="0.8"/><ellipse cx="77" cy="275" rx="8" ry="7" fill="#4e583a" opacity="0.8"/><ellipse cx="79.1085" cy="160.559" rx="5.29858" ry="2.9798" fill="#85886f" opacity="0.81893"/><ellipse cx="3.68366" cy="120.515" rx="4.27141" ry="3.3018" fill="#9a9486" opacity="0.495282"/><ellipse cx="59.5718" cy="88.7531" rx="4.00879" ry="1.52623" fill="#484e3a" opacity="0.536692"/><ellipse cx="35.4943" cy="185.87" rx="2.55861" ry="3.09429" fill="#85886f" opacity="0.505507"/><ellipse cx="0.225407" cy="179.354" rx="2.75418" ry="3.46484" fill="#484e3a" opacity="0.798963"/><ellipse cx="36.7418" cy="192.414" rx="4.37241" ry="1.90956" fill="#484e3a" opacity="0.82639"/><ellipse cx="87.7115" cy="193.152" rx="3.04576" ry="2.22238" fill="#85886f" opacity="0.516382"/><ellipse cx="42.9129" cy="97.9439" rx="3.68261" ry="2.13159" fill="#85886f" opacity="0.642487"/><ellipse cx="95.224" cy="175.508" rx="4.75708" ry="2.23237" fill="#484e3a" opacity="0.681408"/><ellipse cx="1.15296" cy="59.7754" rx="5.34313" ry="1.89304" fill="#484e3a" opacity="0.752295"/><ellipse cx="118.066" cy="189.596" rx="3.24178" ry="2.5494" fill="#484e3a" opacity="0.760241"/><ellipse cx="101.248" cy="177.656" rx="5.3103" ry="1.68236" fill="#484e3a" opacity="0.586296"/><ellipse cx="77.5751" cy="186.123" rx="5.23469" ry="2.59029" fill="#484e3a" opacity="0.57498"/><ellipse cx="40.2336" cy="78.7343" rx="2.52104" ry="2.87835" fill="#484e3a" opacity="0.848691"/><ellipse cx="125.311" cy="130.362" rx="2.83068" ry="2.68792" fill="#484e3a" opacity="0.780518"/><ellipse cx="57.8695" cy="114.155" rx="5.20624" ry="1.56544" fill="#484e3a" opacity="0.647426"/><ellipse cx="92.9214" cy="190.721" rx="4.75803" ry="1.71326" fill="#85886f" opacity="0.623822"/><ellipse cx="18.9542" cy="175.486" rx="3.58604" ry="3.4986" fill="#484e3a" opacity="0.790901"/><ellipse cx="123.953" cy="118.763" rx="4.55327" ry="2.45808" fill="#484e3a" opacity="0.566409"/><ellipse cx="51.2813" cy="74.2434" rx="5.45936" ry="3.41963" fill="#484e3a" opacity="0.700786"/><ellipse cx="63.414" cy="102.079" rx="2.95309" ry="3.06404" fill="#484e3a" opacity="0.796955"/><ellipse cx="98.4121" cy="153.717" rx="4.65874" ry="2.22686" fill="#85886f" opacity="0.731788"/><ellipse cx="35.6682" cy="123.424" rx="4.41809" ry="2.0877" fill="#85886f" opacity="0.828219"/><ellipse cx="82.5109" cy="137.196" rx="3.91447" ry="2.00138" fill="#484e3a" opacity="0.718657"/><ellipse cx="58.7933" cy="171.419" rx="4.79169" ry="2.19577" fill="#85886f" opacity="0.707625"/><ellipse cx="93.7041" cy="173.087" rx="4.95008" ry="3.23982" fill="#484e3a" opacity="0.725335"/><ellipse cx="123.968" cy="191.695" rx="3.85269" ry="1.83235" fill="#484e3a" opacity="0.784648"/><ellipse cx="119.047" cy="122.2" rx="4.5189" ry="2.96071" fill="#85886f" opacity="0.518731"/><ellipse cx="99.1072" cy="137.223" rx="3.47277" ry="2.74747" fill="#85886f" opacity="0.759882"/><ellipse cx="80.8821" cy="157.46" rx="2.56008" ry="2.38214" fill="#484e3a" opacity="0.710047"/><ellipse cx="59.8914" cy="85.8052" rx="2.46734" ry="2.1347" fill="#484e3a" opacity="0.522619"/><ellipse cx="59.0969" cy="108.143" rx="4.06558" ry="1.97569" fill="#484e3a" opacity="0.811273"/><ellipse cx="0.0838982" cy="111.779" rx="3.43515" ry="1.73015" fill="#5e5a50" opacity="0.782548"/><ellipse cx="69.243" cy="102.209" rx="5.35405" ry="3.13704" fill="#484e3a" opacity="0.617641"/><ellipse cx="103.25" cy="146.133" rx="2.49739" ry="2.69188" fill="#484e3a" opacity="0.675544"/><ellipse cx="121.566" cy="193.36" rx="3.22891" ry="3.28693" fill="#484e3a" opacity="0.450379"/><ellipse cx="13.7056" cy="135.043" rx="2.49245" ry="2.75891" fill="#5e5a50" opacity="0.806513"/><ellipse cx="47.7327" cy="115.594" rx="3.02023" ry="3.44491" fill="#484e3a" opacity="0.601912"/><ellipse cx="122.065" cy="185.493" rx="2.90939" ry="3.46196" fill="#484e3a" opacity="0.648522"/><ellipse cx="52.7674" cy="99.2771" rx="3.72114" ry="2.0728" fill="#85886f" opacity="0.640774"/><ellipse cx="56.3204" cy="95.4999" rx="4.89382" ry="1.52641" fill="#85886f" opacity="0.663026"/><ellipse cx="34.771" cy="188.612" rx="2.85981" ry="2.03538" fill="#85886f" opacity="0.511906"/><ellipse cx="125.581" cy="95.5123" rx="3.66121" ry="2.78975" fill="#484e3a" opacity="0.691541"/><ellipse cx="96.5706" cy="96.6" rx="3.17643" ry="2.09364" fill="#484e3a" opacity="0.661947"/><ellipse cx="58.9708" cy="105.351" rx="4.06782" ry="1.57286" fill="#85886f" opacity="0.550969"/><ellipse cx="57.8629" cy="185.903" rx="3.90957" ry="1.52912" fill="#85886f" opacity="0.761353"/><ellipse cx="54.3219" cy="136.468" rx="4.21282" ry="2.46376" fill="#85886f" opacity="0.814686"/><ellipse cx="48.9551" cy="109.821" rx="2.68764" ry="2.0929" fill="#85886f" opacity="0.782009"/><ellipse cx="8.38889" cy="174.26" rx="3.51487" ry="2.07272" fill="#85886f" opacity="0.762292"/><ellipse cx="60.7584" cy="132.619" rx="3.15758" ry="1.80706" fill="#484e3a" opacity="0.684341"/><ellipse cx="29.2124" cy="171.841" rx="4.3226" ry="1.55111" fill="#85886f" opacity="0.739039"/><ellipse cx="124.293" cy="197.758" rx="2.17113" ry="3.18413" fill="#85886f" opacity="0.537693"/><ellipse cx="82.0087" cy="191.076" rx="2.47119" ry="2.08499" fill="#85886f" opacity="0.817199"/><ellipse cx="52.5699" cy="76.3711" rx="2.15247" ry="1.71643" fill="#85886f" opacity="0.60168"/><ellipse cx="9.1445" cy="61.3464" rx="4.59818" ry="3.25691" fill="#484e3a" opacity="0.503733"/><ellipse cx="54.8222" cy="98.6126" rx="3.71353" ry="3.37708" fill="#484e3a" opacity="0.599679"/><ellipse cx="64.2422" cy="185.011" rx="4.17307" ry="2.02649" fill="#484e3a" opacity="0.67067"/><ellipse cx="29.7714" cy="106.826" rx="2.62762" ry="2.92659" fill="#9a9486" opacity="0.712005"/><ellipse cx="11.5796" cy="71.0948" rx="2.83505" ry="3.25385" fill="#5e5a50" opacity="0.642187"/><ellipse cx="6.81472" cy="74.8662" rx="4.38389" ry="1.94618" fill="#9a9486" opacity="0.496431"/><ellipse cx="123.533" cy="149.434" rx="2.48918" ry="2.74959" fill="#85886f" opacity="0.591719"/><ellipse cx="29.8474" cy="101.323" rx="3.22035" ry="2.2715" fill="#5e5a50" opacity="0.50457"/><ellipse cx="105.55" cy="146.944" rx="3.51688" ry="3.20315" fill="#85886f" opacity="0.656996"/><ellipse cx="75.2636" cy="136.122" rx="3.38428" ry="1.694" fill="#85886f" opacity="0.463266"/><ellipse cx="112.936" cy="122.744" rx="2.00154" ry="2.44037" fill="#85886f" opacity="0.805911"/><ellipse cx="78.6721" cy="115.154" rx="2.34912" ry="1.80935" fill="#484e3a" opacity="0.513616"/><ellipse cx="47.5785" cy="108.92" rx="2.5324" ry="2.00813" fill="#85886f" opacity="0.560973"/><ellipse cx="20.5153" cy="94.6227" rx="3.68713" ry="1.56419" fill="#5e5a50" opacity="0.819808"/><ellipse cx="46.8589" cy="189.002" rx="4.35835" ry="2.44346" fill="#85886f" opacity="0.828162"/><ellipse cx="50.936" cy="194.171" rx="3.09144" ry="2.43607" fill="#484e3a" opacity="0.563257"/><ellipse cx="93.0082" cy="157.1" rx="2.84187" ry="2.84437" fill="#484e3a" opacity="0.826193"/><ellipse cx="82.026" cy="115.444" rx="2.02195" ry="1.62173" fill="#85886f" opacity="0.761705"/><ellipse cx="69.6489" cy="196.493" rx="3.22505" ry="1.68763" fill="#484e3a" opacity="0.478487"/><ellipse cx="114.147" cy="124.218" rx="2.18817" ry="1.98693" fill="#85886f" opacity="0.470183"/><ellipse cx="32.4396" cy="112.083" rx="2.17969" ry="1.57521" fill="#484e3a" opacity="0.83865"/><ellipse cx="22.7821" cy="126.751" rx="3.85958" ry="1.66872" fill="#5e5a50" opacity="0.575555"/><ellipse cx="13.7135" cy="131.581" rx="4.094" ry="3.21353" fill="#9a9486" opacity="0.535764"/><ellipse cx="2.21085" cy="131.247" rx="3.99998" ry="2.25326" fill="#5e5a50" opacity="0.70004"/><ellipse cx="92.1561" cy="185.385" rx="3.57165" ry="3.15283" fill="#484e3a" opacity="0.539589"/><ellipse cx="14.6922" cy="98.199" rx="4.70342" ry="3.13888" fill="#5e5a50" opacity="0.57515"/><ellipse cx="16.4863" cy="64.8878" rx="2.29514" ry="2.3573" fill="#484e3a" opacity="0.680793"/><ellipse cx="25.3815" cy="94.4727" rx="2.34486" ry="2.34116" fill="#5e5a50" opacity="0.575572"/><ellipse cx="95.5443" cy="133.632" rx="4.28934" ry="3.01944" fill="#85886f" opacity="0.679892"/><ellipse cx="56.1572" cy="171.436" rx="5.34168" ry="2.95604" fill="#85886f" opacity="0.730471"/><ellipse cx="48.5655" cy="71.8855" rx="2.59277" ry="2.02518" fill="#484e3a" opacity="0.720359"/><ellipse cx="97.001" cy="133.798" rx="2.17721" ry="1.76024" fill="#484e3a" opacity="0.592859"/><ellipse cx="109.194" cy="190.637" rx="2.80884" ry="2.35781" fill="#484e3a" opacity="0.594964"/><ellipse cx="74.2213" cy="172.904" rx="2.33354" ry="2.56062" fill="#85886f" opacity="0.518478"/><ellipse cx="90.0982" cy="117.701" rx="4.78171" ry="1.73641" fill="#85886f" opacity="0.57683"/><ellipse cx="116.204" cy="119.845" rx="3.54499" ry="3.035" fill="#484e3a" opacity="0.824519"/><ellipse cx="67.6403" cy="193.601" rx="2.36247" ry="3.12852" fill="#484e3a" opacity="0.617783"/><ellipse cx="6.64353" cy="194.811" rx="4.01947" ry="2.46399" fill="#484e3a" opacity="0.802716"/><ellipse cx="49.8752" cy="84.2649" rx="2.70405" ry="2.62487" fill="#484e3a" opacity="0.592796"/><ellipse cx="95.3872" cy="88.0259" rx="2.86884" ry="3.46484" fill="#484e3a" opacity="0.786084"/><ellipse cx="107.929" cy="142.632" rx="2.50069" ry="3.16336" fill="#484e3a" opacity="0.646045"/><ellipse cx="4.79349" cy="77.5856" rx="4.51192" ry="3.30036" fill="#5e5a50" opacity="0.529727"/><ellipse cx="101.224" cy="99.9888" rx="5.02092" ry="2.74621" fill="#85886f" opacity="0.770148"/><ellipse cx="64.9915" cy="138.068" rx="3.36183" ry="2.13449" fill="#484e3a" opacity="0.46082"/><ellipse cx="39.6338" cy="108.511" rx="4.46171" ry="2.29821" fill="#484e3a" opacity="0.842955"/><ellipse cx="103.572" cy="186.964" rx="4.34562" ry="2.57344" fill="#85886f" opacity="0.769473"/><ellipse cx="86.2916" cy="128.72" rx="2.27212" ry="1.67454" fill="#484e3a" opacity="0.592347"/><ellipse cx="73.7103" cy="163.144" rx="3.07377" ry="3.35838" fill="#85886f" opacity="0.55984"/><ellipse cx="95.681" cy="150.141" rx="5.14003" ry="2.87535" fill="#85886f" opacity="0.785302"/><ellipse cx="93.8039" cy="141.592" rx="3.80842" ry="3.29226" fill="#484e3a" opacity="0.545634"/><ellipse cx="123.782" cy="131.874" rx="2.01036" ry="2.28033" fill="#484e3a" opacity="0.521253"/><ellipse cx="82.9429" cy="183.433" rx="4.14735" ry="2.27333" fill="#85886f" opacity="0.493562"/><ellipse cx="87.4759" cy="133.246" rx="3.30906" ry="3.27354" fill="#85886f" opacity="0.535083"/><ellipse cx="38.8086" cy="91.8111" rx="5.14041" ry="1.83484" fill="#85886f" opacity="0.703123"/><ellipse cx="97.3439" cy="85.5741" rx="3.98062" ry="3.16054" fill="#484e3a" opacity="0.801434"/><ellipse cx="92.4605" cy="113.443" rx="3.85069" ry="3.30947" fill="#484e3a" opacity="0.570929"/><ellipse cx="3.87081" cy="69.7615" rx="4.11207" ry="1.86776" fill="#5e5a50" opacity="0.526113"/><ellipse cx="75.5042" cy="146.722" rx="4.55123" ry="1.62278" fill="#85886f" opacity="0.643879"/><ellipse cx="105.999" cy="191.795" rx="4.97618" ry="2.79036" fill="#484e3a" opacity="0.820685"/><ellipse cx="106.771" cy="122.123" rx="2.67735" ry="1.81329" fill="#484e3a" opacity="0.487132"/><ellipse cx="93.4995" cy="171.373" rx="4.49585" ry="3.34816" fill="#85886f" opacity="0.83276"/><ellipse cx="79.3877" cy="192.939" rx="2.36009" ry="1.62891" fill="#484e3a" opacity="0.532567"/><ellipse cx="47.5536" cy="119.508" rx="4.60026" ry="1.66756" fill="#85886f" opacity="0.611299"/><ellipse cx="69.0202" cy="107.401" rx="4.0898" ry="2.24882" fill="#484e3a" opacity="0.72349"/><ellipse cx="62.9298" cy="192.591" rx="2.25268" ry="3.01959" fill="#85886f" opacity="0.738501"/><ellipse cx="37.5828" cy="69.9429" rx="3.23949" ry="2.97463" fill="#484e3a" opacity="0.817357"/><ellipse cx="48.5259" cy="95.1359" rx="4.43903" ry="3.078" fill="#484e3a" opacity="0.680272"/><ellipse cx="37.5882" cy="101.857" rx="3.81735" ry="1.60079" fill="#85886f" opacity="0.618304"/><ellipse cx="30.2054" cy="251.61" rx="1.68344" ry="1.40656" fill="#56603c" opacity="0.283607"/><ellipse cx="60.6498" cy="290.142" rx="2.8534" ry="1.57943" fill="#56603c" opacity="0.576869"/><ellipse cx="11.6611" cy="214.048" rx="3.52695" ry="1.00769" fill="#56603c" opacity="0.518069"/><ellipse cx="45.8526" cy="172.985" rx="2.12713" ry="1.68735" fill="#56603c" opacity="0.383986"/><ellipse cx="65.6296" cy="177.428" rx="2.04647" ry="2.46145" fill="#56603c" opacity="0.404925"/><ellipse cx="59.9299" cy="181.327" rx="2.1979" ry="2.43213" fill="#56603c" opacity="0.490473"/><ellipse cx="64.4923" cy="177.412" rx="2.48179" ry="2.16766" fill="#56603c" opacity="0.402143"/><ellipse cx="75.3794" cy="280.185" rx="3.11283" ry="1.95378" fill="#56603c" opacity="0.262618"/><ellipse cx="3.02505" cy="264.117" rx="2.53314" ry="2.31131" fill="#56603c" opacity="0.538989"/><ellipse cx="116.25" cy="216.803" rx="3.99763" ry="2.13437" fill="#56603c" opacity="0.562123"/><ellipse cx="18.8236" cy="265.491" rx="2.55534" ry="2.45813" fill="#56603c" opacity="0.59796"/><ellipse cx="27.5205" cy="221.991" rx="2.17726" ry="1.70476" fill="#56603c" opacity="0.350278"/><ellipse cx="84.6463" cy="185.924" rx="1.92306" ry="1.6865" fill="#56603c" opacity="0.275867"/><ellipse cx="48.4092" cy="279.586" rx="3.71332" ry="1.29479" fill="#56603c" opacity="0.256469"/><ellipse cx="105.193" cy="287.254" rx="2.99728" ry="1.2045" fill="#56603c" opacity="0.332795"/><ellipse cx="116.863" cy="284.445" rx="1.57775" ry="1.2772" fill="#56603c" opacity="0.400157"/><ellipse cx="33.8707" cy="262.219" rx="2.43236" ry="2.16278" fill="#56603c" opacity="0.303193"/><ellipse cx="65.8267" cy="288.972" rx="3.25501" ry="1.13509" fill="#56603c" opacity="0.288844"/><ellipse cx="81.7256" cy="216.374" rx="2.42174" ry="1.71652" fill="#56603c" opacity="0.453596"/><ellipse cx="122.663" cy="200.151" rx="2.92168" ry="1.39459" fill="#56603c" opacity="0.440875"/><ellipse cx="92.894" cy="187.165" rx="2.70288" ry="2.05864" fill="#56603c" opacity="0.252849"/><ellipse cx="97.9337" cy="221.681" rx="2.76041" ry="1.91576" fill="#56603c" opacity="0.527513"/><ellipse cx="7.11956" cy="231.566" rx="1.59573" ry="1.57823" fill="#56603c" opacity="0.371014"/><ellipse cx="2.71754" cy="207.027" rx="2.62506" ry="1.98232" fill="#56603c" opacity="0.573677"/><ellipse cx="47.0475" cy="235.138" rx="3.28295" ry="2.40594" fill="#56603c" opacity="0.582379"/><ellipse cx="125.479" cy="207.514" rx="1.91661" ry="2.39784" fill="#56603c" opacity="0.277084"/><ellipse cx="56.988" cy="260.081" rx="2.82185" ry="1.58312" fill="#56603c" opacity="0.573579"/><ellipse cx="37.9997" cy="237.759" rx="3.57417" ry="1.20701" fill="#56603c" opacity="0.372838"/><ellipse cx="62.774" cy="239.476" rx="2.01841" ry="1.68091" fill="#56603c" opacity="0.270939"/><ellipse cx="11.1664" cy="212.394" rx="1.85947" ry="2.45129" fill="#56603c" opacity="0.342156"/><ellipse cx="35.0194" cy="265.827" rx="3.35289" ry="1.39316" fill="#56603c" opacity="0.54021"/><ellipse cx="79.4669" cy="218.022" rx="3.07203" ry="1.36857" fill="#56603c" opacity="0.342187"/><ellipse cx="111.318" cy="224.076" rx="3.74321" ry="1.2654" fill="#56603c" opacity="0.298056"/><ellipse cx="6.59799" cy="260.507" rx="2.90305" ry="1.01447" fill="#56603c" opacity="0.265153"/><ellipse cx="104.654" cy="230.82" rx="3.6783" ry="1.05965" fill="#56603c" opacity="0.456099"/><ellipse cx="14.9166" cy="258.256" rx="3.02831" ry="1.91807" fill="#56603c" opacity="0.327532"/><ellipse cx="120.526" cy="184.434" rx="1.6601" ry="2.02607" fill="#56603c" opacity="0.282482"/><ellipse cx="8.488" cy="226.695" rx="3.12218" ry="2.3381" fill="#56603c" opacity="0.502303"/><ellipse cx="8.80851" cy="248.817" rx="3.60908" ry="1.18079" fill="#56603c" opacity="0.514075"/><ellipse cx="32.8488" cy="207.136" rx="1.50375" ry="2.13732" fill="#56603c" opacity="0.430514"/><ellipse cx="114.55" cy="227.329" rx="1.88855" ry="1.3246" fill="#56603c" opacity="0.342176"/><ellipse cx="120.24" cy="195.835" rx="1.72051" ry="1.5291" fill="#56603c" opacity="0.277691"/><ellipse cx="54.0007" cy="246.216" rx="3.12656" ry="1.26221" fill="#56603c" opacity="0.298583"/><ellipse cx="62.3831" cy="254.151" rx="2.61788" ry="1.85991" fill="#56603c" opacity="0.569245"/><ellipse cx="18.4224" cy="203.408" rx="2.73441" ry="1.80417" fill="#56603c" opacity="0.565065"/></g><rect width="127" height="292" filter="url(#nz)" opacity="0.450"/><rect y="0" width="127" height="292" filter="url(#nz2)" opacity="0.220"/><rect width="1.500" height="292" fill="#3c3c34" opacity="0.600"/></svg></div>
<div style="left:990px;top:0px;width:402px;height:248px;background:#f0f0f0;box-shadow:0 0 7px 1px rgba(0,0,0,0.400);border:1px solid #9a9a9a;border-left:1.500px solid #7c7c7c;border-top-color:#5a5a5a;border-right:1.500px solid #8c9cb2;"></div>
<div style="left:991.5px;top:1px;width:399.5px;height:30px;background:#ffffff;"></div>
<svg style="left:1001px;top:7px;" width="16" height="16" viewBox="0 0 16 16"><rect x="0.500" y="0.500" width="15" height="15" fill="#fbf5f5" stroke="#efe4e4"/><path d="M3 3c3 1 7 6 10 10M13 3c-3 1-7 6-10 10" fill="none" stroke="#e3a0ac" stroke-width="2"/><path d="M5.500 5.500l5 5M10.500 5.500l-5 5" stroke="#a8a8d4" stroke-width="1.800"/></svg>
<span class="t" style="left:1021.00px;top:9.50px;font-size:12.5px;line-height:14.00px;color:#9a9a9a;transform:scaleX(0.9188);">Serial Forwarding</span>
<span class="t" style="left:1320.50px;top:8.00px;font-size:13px;line-height:15.00px;color:#9a9a9a;transform:scaleX(1.0020);">?</span>
<svg style="left:1363px;top:9.5px;" width="12" height="12" viewBox="0 0 12 12"><path d="M0.500 0.500l10.500 10.500M11 0.500l-10.500 10.500" stroke="#8a8a8a" stroke-width="1.100"/></svg>
<span class="t" style="left:1002.00px;top:46.80px;font-size:11.5px;line-height:12.00px;color:#000;transform:scaleX(0.8912);">Node</span>
<div style="left:1195px;top:42px;width:186px;height:19.5px;background:#e1e1e1;border:1px solid #adadad;"></div>
<span class="t" style="left:1200.00px;top:46.20px;font-size:11.5px;line-height:12.00px;color:#000;transform:scaleX(0.9299);">124: org.ardupilot.f303_MatekGP!</span>
<svg style="left:1368px;top:50.5px;" width="9" height="6" viewBox="0 0 9 6"><path d="M0.300 0.400l3.800 3.800 3.800-3.800" fill="none" stroke="#444" stroke-width="1.100"/></svg>
<span class="t" style="left:1002.00px;top:72.80px;font-size:11.5px;line-height:12.00px;color:#000;transform:scaleX(0.8749);">UART Locking</span>
<div style="left:1195px;top:68px;width:186px;height:19.5px;background:#e1e1e1;border:1px solid #adadad;"></div>
<span class="t" style="left:1200.00px;top:72.20px;font-size:11.5px;line-height:12.00px;color:#000;transform:scaleX(0.8495);">Locked</span>
<svg style="left:1368px;top:76.5px;" width="9" height="6" viewBox="0 0 9 6"><path d="M0.300 0.400l3.800 3.800 3.800-3.800" fill="none" stroke="#444" stroke-width="1.100"/></svg>
<span class="t" style="left:1002.00px;top:98.80px;font-size:11.5px;line-height:12.00px;color:#000;transform:scaleX(0.9321);">Baudrate</span>
<div style="left:1195px;top:94px;width:186px;height:19.5px;background:#e1e1e1;border:1px solid #adadad;"></div>
<span class="t" style="left:1200.00px;top:98.20px;font-size:11.5px;line-height:12.00px;color:#000;transform:scaleX(0.8925);">Unchanged</span>
<svg style="left:1368px;top:102.5px;" width="9" height="6" viewBox="0 0 9 6"><path d="M0.300 0.400l3.800 3.800 3.800-3.800" fill="none" stroke="#444" stroke-width="1.100"/></svg>
<span class="t" style="left:1002.00px;top:124.80px;font-size:11.5px;line-height:12.00px;color:#000;transform:scaleX(0.9278);">Listen Port</span>
<div style="left:1195px;top:120px;width:186px;height:19.5px;background:#ffffff;border:1px solid #7a7a7a;"></div>
<span class="t" style="left:1198.00px;top:124.20px;font-size:11.5px;line-height:12.00px;color:#000;transform:scaleX(0.8991);">2001</span>
<div style="left:1365px;top:122px;width:14px;height:16px;background:#eaeaea;border:1px solid #c6c6c6;"></div>
<div style="left:1365px;top:129.5px;width:14px;height:1px;background:#c6c6c6;"></div>
<svg style="left:1368.5px;top:124.5px;" width="7" height="11" viewBox="0 0 7 11"><path d="M0.300 3.500h6.400L3.500 0.300zM0.300 7.500h6.400L3.500 10.700z" fill="#111"/></svg>
<span class="t" style="left:1002.00px;top:150.80px;font-size:11.5px;line-height:12.00px;color:#000;transform:scaleX(0.9497);">State</span>
<div style="left:1035px;top:146px;width:346px;height:19.5px;background:#ffffff;border:1px solid #7a7a7a;"></div>
<span class="t" style="left:1038.00px;top:150.20px;font-size:11.5px;line-height:12.00px;color:#000;transform:scaleX(0.9576);">connection from 127.0.0.1:55875</span>
<span class="t" style="left:1002.00px;top:176.80px;font-size:11.5px;line-height:12.00px;color:#000;transform:scaleX(0.8867);">RX Bytes</span>
<div style="left:1052px;top:172px;width:329px;height:19.5px;background:#ffffff;border:1px solid #7a7a7a;"></div>
<span class="t" style="left:1055.00px;top:176.20px;font-size:11.5px;line-height:12.00px;color:#000;transform:scaleX(0.9546);">231112</span>
<span class="t" style="left:1002.00px;top:202.80px;font-size:11.5px;line-height:12.00px;color:#000;transform:scaleX(0.8896);">TX Bytes</span>
<div style="left:1051px;top:198px;width:330px;height:19.5px;background:#ffffff;border:1px solid #7a7a7a;"></div>
<span class="t" style="left:1054.00px;top:202.20px;font-size:11.5px;line-height:12.00px;color:#000;transform:scaleX(1.1728);">8</span>
<span class="t" style="left:1002.00px;top:225.00px;font-size:11.5px;line-height:12.00px;color:#000;transform:scaleX(0.9059);">uBlox message handling</span>
<div style="left:1194.5px;top:224px;width:13px;height:13px;background:#ffffff;border:1px solid #333;"></div>
<svg style="left:1194.5px;top:224px;" width="13" height="13" viewBox="0 0 13 13"><path d="M2.800 6.500l2.700 3 5-6" fill="none" stroke="#222" stroke-width="1.300"/></svg>
<svg style="left:0px;top:0px;pointer-events:none;" width="1395" height="539" viewBox="0 0 1395 539"><ellipse cx="1053" cy="182.5" rx="52" ry="14.5" fill="none" stroke="#e01418" stroke-width="1.6"/></svg>
<svg style="left:0px;top:0px;pointer-events:none;" width="1395" height="539" viewBox="0 0 1395 539"><ellipse cx="1204" cy="229" rx="26.7" ry="10.2" fill="none" stroke="#e01418" stroke-width="1.6"/></svg>
<svg style="left:0px;top:0px;pointer-events:none;" width="1395" height="539" viewBox="0 0 1395 539"><ellipse cx="1281.5" cy="77.8" rx="108.4" ry="15.2" fill="none" stroke="#e01418" stroke-width="1.6"/></svg>
<svg style="left:0px;top:0px;pointer-events:none;" width="1395" height="539" viewBox="0 0 1395 539"><ellipse cx="472.1" cy="238.7" rx="130.7" ry="16.8" fill="none" stroke="#e01418" stroke-width="1.6"/></svg>
<svg style="left:0px;top:0px;pointer-events:none;" width="1395" height="539" viewBox="0 0 1395 539"><ellipse cx="85" cy="529" rx="14.3" ry="27.5" fill="none" stroke="#e01418" stroke-width="1.8"/></svg>
</body></html>
